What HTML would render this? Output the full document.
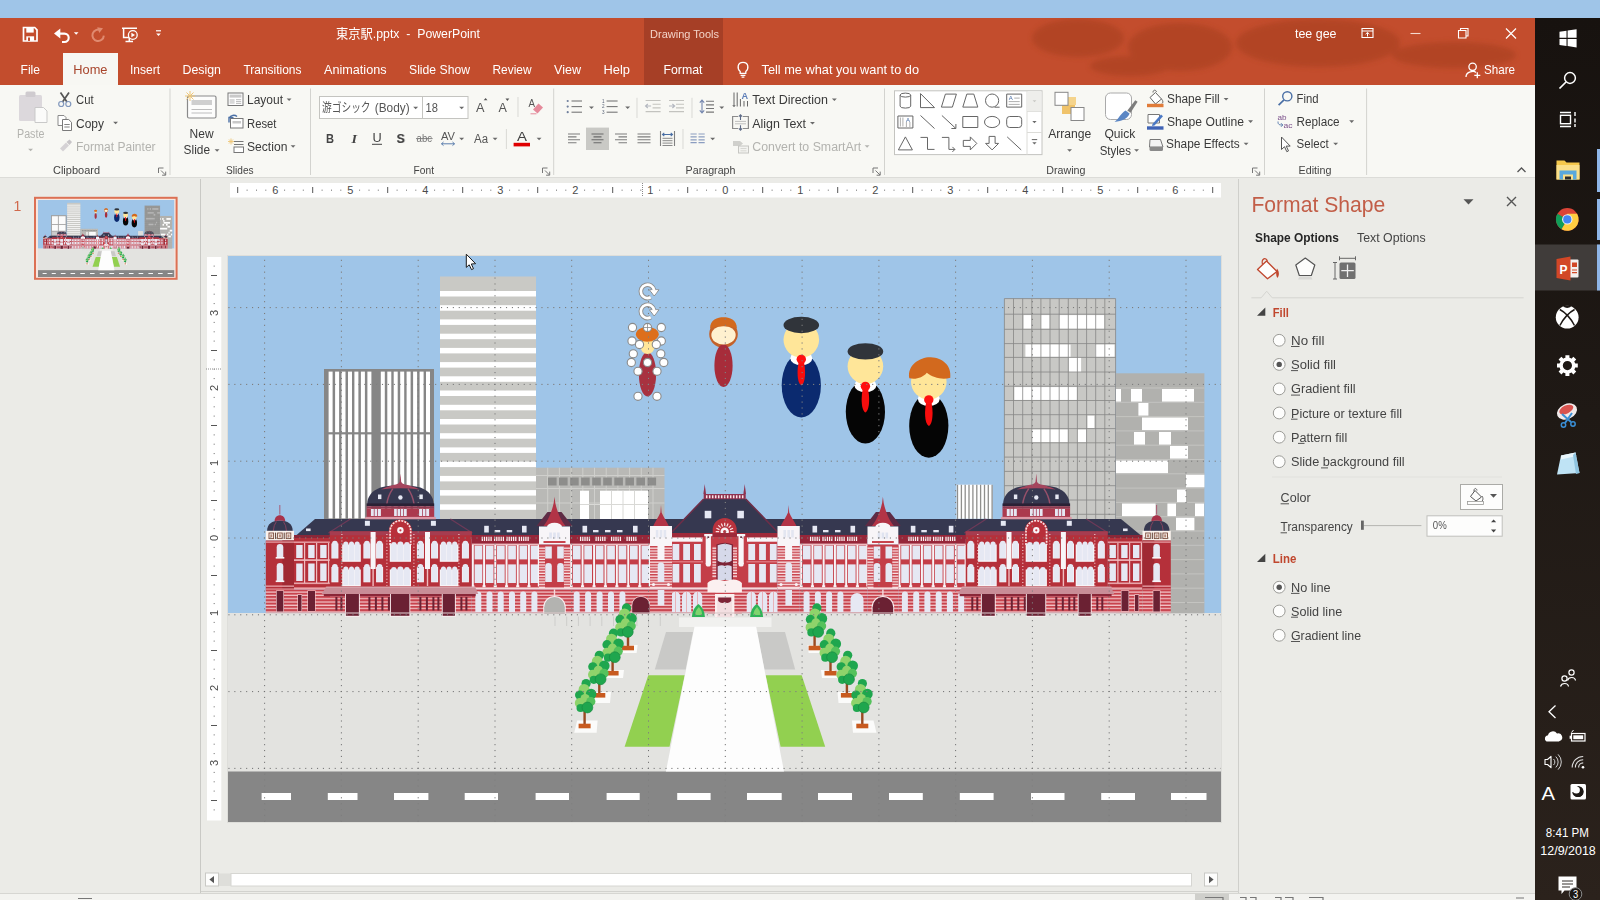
<!DOCTYPE html>
<html lang="en"><head><meta charset="utf-8"><title>PowerPoint</title>
<style>
*{box-sizing:border-box;margin:0;padding:0}
html,body{width:1600px;height:900px;overflow:hidden;background:#ebebe7;}
body{position:relative;font-family:"Liberation Sans","Noto Sans CJK JP",sans-serif;font-size:12px;color:#3b3b3b;}
.abs{position:absolute}
.t{position:absolute;white-space:nowrap;line-height:1}
#topstrip{left:0;top:0;width:1600px;height:18px;background:#9fc5e8}
#titlebar{left:0;top:18px;width:1535px;height:67px;background:#c34d2d}
#ctxtab{left:644px;top:18px;width:79px;height:67px;background:#a63f26}
#hometab{left:63px;top:53px;width:55px;height:33px;background:#f7f7f3}
#ribbon{left:0;top:85px;width:1535px;height:93px;background:#f8f8f4;border-bottom:1px solid #dcdcd8}
#leftpanel{left:0;top:179px;width:201px;height:714px;background:#ebebe7;border-right:1px solid #c9c9c5}
#work{left:201px;top:179px;width:1037px;height:714px;background:#ebebe7}
#pane{left:1238px;top:179px;width:297px;height:714px;background:#ebebe7;border-left:1px solid #cfcfcb}
#status{left:0;top:893px;width:1535px;height:7px;background:#f3f3f0;border-top:1px solid #d6d6d2}
#taskbar{left:1535px;top:18px;width:65px;height:882px;background:#1d1815}
.tab{color:#fff;font-size:12.5px;top:62px}
.rt{font-size:12.5px;color:#3a3a3a}
.rdis{color:#b4b4b0}
.grp{font-size:11.5px;color:#4a4a4a;top:165px}
.sep{position:absolute;width:1px;background:#d5d5d1;top:89px;height:86px}

.uisvg{position:absolute;left:0;top:0;width:1600px;height:900px;pointer-events:none;font-family:"Liberation Sans","Noto Sans CJK JP",sans-serif}

#slidesvg{position:absolute;left:0;top:0;width:1600px;height:900px;pointer-events:none}
.rn{font-family:"Liberation Sans",sans-serif;font-size:11px;fill:#4a4a4a}
</style></head>
<body>

<!-- base -->
<div id="topstrip" class="abs"></div>
<div id="titlebar" class="abs"></div>
<div id="ctxtab" class="abs"></div>
<div id="hometab" class="abs"></div>
<div id="ribbon" class="abs"></div>
<div id="leftpanel" class="abs"></div>
<div id="work" class="abs"></div>
<div id="pane" class="abs"></div>
<div id="status" class="abs"></div>
<div id="taskbar" class="abs"></div>
<!-- title -->
<svg class="uisvg" viewBox="0 0 1600 900">
<clipPath id="tbclip"><rect x="0" y="18" width="1535" height="67"/></clipPath>
<filter id="tbblur" x="-20%" y="-50%" width="140%" height="200%"><feGaussianBlur stdDeviation="2.5"/></filter>
<g clip-path="url(#tbclip)"><g fill="#a23c1f" opacity="0.5" filter="url(#tbblur)">
<ellipse cx="1078" cy="38" rx="46" ry="19"/><ellipse cx="1180" cy="47" rx="52" ry="24"/><ellipse cx="1318" cy="43" rx="82" ry="24"/><ellipse cx="1454" cy="55" rx="62" ry="13"/><ellipse cx="1130" cy="66" rx="40" ry="10"/>
</g></g>
<path d="M23.5 27.5h11.2l2.3 2.3v11.2h-13.5z" fill="none" stroke="#fff" stroke-width="1.7"/>
<rect x="26.3" y="28" width="7.4" height="4.6" fill="#ffffff"/>
<rect x="26.3" y="36.3" width="7.8" height="4.6" fill="#ffffff"/>
<rect x="28" y="37.5" width="2" height="3.4" fill="#c34d2d"/>
<path d="M58.5 33.6H64.5A4.2 4.2 0 0 1 64.5 42H62" fill="none" stroke="#fff" stroke-width="2.1"/>
<path d="M54 33.6L60.3 28.6V38.6Z" fill="#ffffff"/>
<path d="M73.9 32.3h4.6l-2.3 2.5z" fill="#ffffff"/>
<path d="M100.6 30.2A5.7 5.7 0 1 0 103.8 35.6" fill="none" stroke="#e08a70" stroke-width="2"/>
<path d="M97.2 27.2L103 28.3L99.3 33Z" fill="#e08a70"/>
<path d="M122 28.2H137M123.6 28.2V37.6H129M125.5 41.5H133M129.3 38V41.5" fill="none" stroke="#fff" stroke-width="1.5"/>
<circle cx="132.8" cy="35" r="4.4" fill="#c34d2d" stroke="#fff" stroke-width="1.3"/>
<path d="M131.4 32.8L135 35L131.4 37.2Z" fill="#ffffff"/>
<rect x="156" y="30.2" width="5" height="1.2" fill="#ffffff"/>
<path d="M156.2 33.4h4.6l-2.3 2.5z" fill="#ffffff"/>
<text x="336" y="38" textLength="144" lengthAdjust="spacingAndGlyphs" font-size="13" fill="#ffffff" style="white-space:pre">東京駅.pptx  -  PowerPoint</text>
<text x="650" y="37.5" textLength="69" lengthAdjust="spacingAndGlyphs" font-size="11.3" fill="#f3d3c8">Drawing Tools</text>
<text x="1295" y="38" textLength="41.5" lengthAdjust="spacingAndGlyphs" font-size="13" fill="#ffffff">tee gee</text>
<path d="M1362 28.5h11v9h-11zM1362 31h11" fill="none" stroke="#fff" stroke-width="1.1"/>
<path d="M1367.5 36.5V32.6M1365.6 34.2L1367.5 32.4L1369.4 34.2" fill="none" stroke="#fff" stroke-width="1"/>
<path d="M1410.5 33.5H1420.5" fill="none" stroke="#f5d9cf" stroke-width="1.1"/>
<path d="M1458.5 30.5h7.5v7.5h-7.5zM1460.5 30.5V28.5H1468V36H1466" fill="none" stroke="#fff" stroke-width="1.1"/>
<path d="M1506 28.5L1516 38.5M1516 28.5L1506 38.5" fill="none" stroke="#fff" stroke-width="1.2"/>
<text x="20.5" y="73.5" textLength="19.5" lengthAdjust="spacingAndGlyphs" font-size="13" fill="#ffffff">File</text>
<text x="130" y="73.5" textLength="30" lengthAdjust="spacingAndGlyphs" font-size="13" fill="#ffffff">Insert</text>
<text x="182.5" y="73.5" textLength="38.5" lengthAdjust="spacingAndGlyphs" font-size="13" fill="#ffffff">Design</text>
<text x="243.5" y="73.5" textLength="58" lengthAdjust="spacingAndGlyphs" font-size="13" fill="#ffffff">Transitions</text>
<text x="324" y="73.5" textLength="62.5" lengthAdjust="spacingAndGlyphs" font-size="13" fill="#ffffff">Animations</text>
<text x="409" y="73.5" textLength="61" lengthAdjust="spacingAndGlyphs" font-size="13" fill="#ffffff">Slide Show</text>
<text x="492.5" y="73.5" textLength="39" lengthAdjust="spacingAndGlyphs" font-size="13" fill="#ffffff">Review</text>
<text x="554" y="73.5" textLength="27" lengthAdjust="spacingAndGlyphs" font-size="13" fill="#ffffff">View</text>
<text x="603.5" y="73.5" textLength="26.5" lengthAdjust="spacingAndGlyphs" font-size="13" fill="#ffffff">Help</text>
<text x="663.5" y="73.5" textLength="39" lengthAdjust="spacingAndGlyphs" font-size="13" fill="#ffffff">Format</text>
<text x="761.5" y="73.5" textLength="157.5" lengthAdjust="spacingAndGlyphs" font-size="13" fill="#ffffff">Tell me what you want to do</text>
<text x="1484" y="73.5" textLength="31" lengthAdjust="spacingAndGlyphs" font-size="13" fill="#ffffff">Share</text>
<text x="73.3" y="73.5" textLength="34.2" lengthAdjust="spacingAndGlyphs" font-size="13" fill="#a8452c">Home</text>
<path d="M740.2 71.5C737 69 737.2 62.3 743 62.3C748.8 62.3 749 69 745.8 71.5V73.4H740.2ZM740.6 75.3H745.4M741.6 77.2H744.4" fill="none" stroke="#fff" stroke-width="1.3"/>
<circle cx="1472.6" cy="66.8" r="3.7" fill="none" stroke="#fff" stroke-width="1.3"/>
<path d="M1466 77C1466 71.3 1474 70.6 1476 72.5" fill="none" stroke="#fff" stroke-width="1.3"/>
<path d="M1477.3 72.3V78.3M1474.3 75.3H1480.3" fill="none" stroke="#fff" stroke-width="1.3"/>
</svg>
<!-- ribbon -->
<svg class="uisvg" viewBox="0 0 1600 900">
<path d="M170 88.5V175" fill="none" stroke="#d3d3cf" stroke-width="1"/>
<path d="M310.5 88.5V175" fill="none" stroke="#d3d3cf" stroke-width="1"/>
<path d="M553.7 88.5V175" fill="none" stroke="#d3d3cf" stroke-width="1"/>
<path d="M884.5 88.5V175" fill="none" stroke="#d3d3cf" stroke-width="1"/>
<path d="M1264.5 88.5V175" fill="none" stroke="#d3d3cf" stroke-width="1"/>
<path d="M1366.6 88.5V175" fill="none" stroke="#d3d3cf" stroke-width="1"/>
<rect x="19" y="95" width="23" height="26" fill="#dcd8dc" rx="1.5"/>
<rect x="25.5" y="91.5" width="10" height="5.5" fill="#cfcbcf" rx="1.5"/>
<path d="M35 107.5h8.5l3.5 3.5v11.5h-12z" fill="#fbfbfa" stroke="#c9c9c9" stroke-width="1"/>
<text x="17" y="138" textLength="27.4" lengthAdjust="spacingAndGlyphs" font-size="12.5" fill="#b3b3af">Paste</text>
<path d="M28.1 148.7h4.9l-2.4 2.6z" fill="#b3b3af"/>
<path d="M60.5 92.5L67 102M69 92.5L62.5 102" fill="none" stroke="#555" stroke-width="1.7"/>
<circle cx="61.2" cy="104" r="2.5" fill="none" stroke="#8298bd" stroke-width="1.2"/>
<circle cx="68.3" cy="104" r="2.5" fill="none" stroke="#8298bd" stroke-width="1.2"/>
<text x="76" y="104" textLength="17.6" lengthAdjust="spacingAndGlyphs" font-size="12.5" fill="#3a3a3a">Cut</text>
<path d="M58 115.5h6l2 2v8h-8z" fill="#fff" stroke="#8a8a8a" stroke-width="1"/>
<path d="M62.5 119.5h6.2l2.8 2.8v8.2h-9z" fill="#fff" stroke="#7a7a7a" stroke-width="1"/>
<path d="M64.3 124.5h5.4M64.3 127h5.4" fill="none" stroke="#777" stroke-width="0.9"/>
<text x="76" y="127.6" textLength="28" lengthAdjust="spacingAndGlyphs" font-size="12.5" fill="#3a3a3a">Copy</text>
<path d="M113.1 121.7h4.9l-2.4 2.6z" fill="#6a6a6a"/>
<path d="M60 148.5L66 142.5L69 145.5L63 151.5Z" fill="#d5d2d5"/>
<path d="M66.5 142L69.5 139.5L72 142L69.5 145Z" fill="#c8c5c8"/>
<text x="76" y="150.6" textLength="79.6" lengthAdjust="spacingAndGlyphs" font-size="12.5" fill="#b3b3af">Format Painter</text>
<text x="53" y="174" textLength="47" lengthAdjust="spacingAndGlyphs" font-size="11.8" fill="#444">Clipboard</text>
<path d="M158.5 173V168H163.5M161 170.5L165.5 175M165.7 171.6V175.2H162.1" fill="none" stroke="#777" stroke-width="1"/>
<rect x="187.5" y="96" width="28.5" height="22" fill="#fdfdfc" stroke="#8a8a8a" stroke-width="1.2" rx="1.5"/>
<rect x="191.5" y="100" width="20.5" height="5" fill="#cfcfcf"/>
<path d="M191.5 109.5h20.5M191.5 113h20.5" fill="none" stroke="#bdbdbd" stroke-width="1.2"/>
<path d="M190 91v10M185 96h10M186.5 92.5l7 7M193.5 92.5l-7 7" fill="none" stroke="#eec677" stroke-width="1"/>
<text x="189.6" y="138" textLength="24" lengthAdjust="spacingAndGlyphs" font-size="12.5" fill="#3a3a3a">New</text>
<text x="183.6" y="154.4" textLength="26.4" lengthAdjust="spacingAndGlyphs" font-size="12.5" fill="#3a3a3a">Slide</text>
<path d="M214.6 149.2h4.9l-2.4 2.6z" fill="#6a6a6a"/>
<rect x="228" y="93" width="15" height="12.5" fill="#fff" stroke="#777" stroke-width="1"/>
<rect x="229.6" y="94.6" width="11.8" height="3" fill="#c9c9c9"/>
<rect x="229.6" y="99" width="5" height="4.8" fill="#d9d9d9"/>
<path d="M236 99.7h5.2M236 101.6h5.2M236 103.4h5.2" fill="none" stroke="#aaa" stroke-width="0.8"/>
<text x="247" y="104" textLength="36" lengthAdjust="spacingAndGlyphs" font-size="12.5" fill="#3a3a3a">Layout</text>
<path d="M286.6 98.4h4.9l-2.4 2.6z" fill="#6a6a6a"/>
<rect x="230.5" y="118.5" width="12.5" height="9.5" fill="#fff" stroke="#777" stroke-width="1"/>
<rect x="232.5" y="121" width="8.5" height="2.5" fill="#c9c9c9"/>
<path d="M229 122.5V117.5H233.5M229.2 118A5 5 0 0 1 237 116.6" fill="none" stroke="#4a6fa5" stroke-width="1.4"/>
<text x="247" y="127.6" textLength="29.4" lengthAdjust="spacingAndGlyphs" font-size="12.5" fill="#3a3a3a">Reset</text>
<path d="M234 141.5h9.5M234 144.5h9.5" fill="none" stroke="#777" stroke-width="1.1"/>
<rect x="234" y="147" width="9.5" height="5.5" fill="#fff" stroke="#777" stroke-width="1"/>
<path d="M231 138.5v6M228 141.5h6M229 139.5l4 4M233 139.5l-4 4" fill="none" stroke="#eec677" stroke-width="0.9"/>
<text x="247" y="150.6" textLength="40.4" lengthAdjust="spacingAndGlyphs" font-size="12.5" fill="#3a3a3a">Section</text>
<path d="M290.6 145.2h4.9l-2.4 2.6z" fill="#6a6a6a"/>
<text x="226" y="174" textLength="27.6" lengthAdjust="spacingAndGlyphs" font-size="11.8" fill="#444">Slides</text>
<rect x="319.5" y="96.5" width="103" height="22" fill="#fff" stroke="#c4c4c0" stroke-width="1"/>
<rect x="422.5" y="96.5" width="45.5" height="22" fill="#fff" stroke="#c4c4c0" stroke-width="1"/>
<text x="322" y="112.4" textLength="48.6" lengthAdjust="spacingAndGlyphs" font-size="12.5" fill="#555">游ゴシック</text>
<text x="374.8" y="112.4" textLength="34.8" lengthAdjust="spacingAndGlyphs" font-size="12.5" fill="#555">(Body)</text>
<path d="M413.2 106.7h4.9l-2.4 2.6z" fill="#6a6a6a"/>
<text x="425.6" y="112.4" textLength="12.4" lengthAdjust="spacingAndGlyphs" font-size="12.5" fill="#555">18</text>
<path d="M459.2 106.7h4.9l-2.4 2.6z" fill="#6a6a6a"/>
<text x="476" y="112" textLength="8.5" lengthAdjust="spacingAndGlyphs" font-size="13.5" fill="#555">A</text>
<path d="M483.7 100.3l1.9-2.3l1.9 2.3z" fill="#555"/>
<text x="498.6" y="112" textLength="8.4" lengthAdjust="spacingAndGlyphs" font-size="12" fill="#555">A</text>
<path d="M505.5 98.6l1.9 2.3l1.9-2.3z" fill="#555"/>
<path d="M518 97V117" fill="none" stroke="#d9d9d5" stroke-width="1"/>
<text x="528.5" y="107" textLength="6.5" lengthAdjust="spacingAndGlyphs" font-size="10.5" fill="#555">A</text>
<path d="M533 109.5L538.5 103.5L543 107.5L537.5 113.5Z" fill="#e58a9a"/>
<path d="M530.5 113.8h6" fill="none" stroke="#e58a9a" stroke-width="1"/>
<text x="326" y="142.6" textLength="8" lengthAdjust="spacingAndGlyphs" font-size="13" fill="#444" font-weight="bold">B</text>
<text x="351.5" y="142.6" textLength="5.5" lengthAdjust="spacingAndGlyphs" font-size="13" fill="#444" font-weight="bold" font-style="italic" font-family="Liberation Serif,serif">I</text>
<text x="372.4" y="141.8" textLength="9.2" lengthAdjust="spacingAndGlyphs" font-size="13" fill="#444">U</text>
<path d="M372 144.3h10" fill="none" stroke="#444" stroke-width="1"/>
<text x="397.4" y="143.2" textLength="8.2" lengthAdjust="spacingAndGlyphs" font-size="13.5" fill="#b9b9b9" font-weight="bold">S</text>
<text x="396.6" y="142.6" textLength="8.2" lengthAdjust="spacingAndGlyphs" font-size="13.5" fill="#444" font-weight="bold">S</text>
<text x="416.6" y="142" textLength="15.4" lengthAdjust="spacingAndGlyphs" font-size="10.5" fill="#777">abc</text>
<path d="M416 138.6h16.6" fill="none" stroke="#777" stroke-width="0.9"/>
<text x="441" y="140" textLength="14" lengthAdjust="spacingAndGlyphs" font-size="10.5" fill="#555">AV</text>
<path d="M441.5 143.8h13M443.5 142l-2 1.8l2 1.8M452.5 142l2 1.8l-2 1.8" fill="none" stroke="#4a6fa5" stroke-width="0.9"/>
<path d="M459.2 137.7h4.9l-2.4 2.6z" fill="#6a6a6a"/>
<text x="474" y="142.6" textLength="14" lengthAdjust="spacingAndGlyphs" font-size="12" fill="#555">Aa</text>
<path d="M492.6 137.7h4.9l-2.4 2.6z" fill="#6a6a6a"/>
<path d="M506.4 129V149" fill="none" stroke="#d9d9d5" stroke-width="1"/>
<text x="517" y="140.6" textLength="10" lengthAdjust="spacingAndGlyphs" font-size="13.5" fill="#444">A</text>
<rect x="513.6" y="142.8" width="16.4" height="3.6" fill="#e00000"/>
<path d="M536.6 137.7h4.9l-2.4 2.6z" fill="#6a6a6a"/>
<text x="413.6" y="174" textLength="20.4" lengthAdjust="spacingAndGlyphs" font-size="11.8" fill="#444">Font</text>
<path d="M542.5 173V168H547.5M545 170.5L549.5 175M549.7 171.6V175.2H546.1" fill="none" stroke="#777" stroke-width="1"/>
<circle cx="567.7" cy="101" r="1.1" fill="#6f7f9c"/>
<path d="M571.5 101h10.5" fill="none" stroke="#777" stroke-width="1.1"/>
<circle cx="567.7" cy="106.6" r="1.1" fill="#6f7f9c"/>
<path d="M571.5 106.6h10.5" fill="none" stroke="#777" stroke-width="1.1"/>
<circle cx="567.7" cy="112.2" r="1.1" fill="#6f7f9c"/>
<path d="M571.5 112.2h10.5" fill="none" stroke="#777" stroke-width="1.1"/>
<path d="M589 106.4h4.9l-2.4 2.6z" fill="#6a6a6a"/>
<text x="602" y="102.7" font-size="4.6" fill="#5a6478">1</text>
<path d="M606.6 101h11" fill="none" stroke="#777" stroke-width="1.1"/>
<text x="602" y="108.3" font-size="4.6" fill="#5a6478">2</text>
<path d="M606.6 106.6h11" fill="none" stroke="#777" stroke-width="1.1"/>
<text x="602" y="113.9" font-size="4.6" fill="#5a6478">3</text>
<path d="M606.6 112.2h11" fill="none" stroke="#777" stroke-width="1.1"/>
<path d="M625.2 106.4h4.9l-2.4 2.6z" fill="#6a6a6a"/>
<path d="M637 97.8V118" fill="none" stroke="#d9d9d5" stroke-width="1"/>
<path d="M645.6 100.5h15M652.6 104.2h8M652.6 107.9h8M645.6 111.6h15" fill="none" stroke="#c3c3bf" stroke-width="1.1"/>
<path d="M651.1 106h-5.5M647.8 104l-2.2 2l2.2 2" fill="none" stroke="#b4b8c0" stroke-width="1.2"/>
<path d="M669 100.5h15M676 104.2h8M676 107.9h8M669 111.6h15" fill="none" stroke="#c3c3bf" stroke-width="1.1"/>
<path d="M669 106h5.5M672.4 104l2.2 2l-2.2 2" fill="none" stroke="#b4b8c0" stroke-width="1.2"/>
<path d="M692 97.8V118" fill="none" stroke="#d9d9d5" stroke-width="1"/>
<path d="M702 100v13M699.8 102.6l2.2-2.6l2.2 2.6M699.8 110.4l2.2 2.6l2.2-2.6" fill="none" stroke="#7385ad" stroke-width="1.1"/>
<path d="M706 101.3h8M706 104.9h8M706 108.5h8M706 112.1h8" fill="none" stroke="#777" stroke-width="1.1"/>
<path d="M719.3 106.4h4.9l-2.4 2.6z" fill="#6a6a6a"/>
<path d="M734 92.5v14M737.2 92.5v14M740.4 99v7.5M744 101v5.5M747.5 101v5.5M732.8 105l1.2 1.6l1.2-1.6" fill="none" stroke="#666" stroke-width="1"/>
<text x="741.6" y="99.3" textLength="6.6" lengthAdjust="spacingAndGlyphs" font-size="9.5" fill="#5f7fb8" font-weight="bold">A</text>
<text x="752.3" y="103.8" textLength="75.7" lengthAdjust="spacingAndGlyphs" font-size="12.5" fill="#3a3a3a">Text Direction</text>
<path d="M831.9 98.4h4.9l-2.4 2.6z" fill="#6a6a6a"/>
<path d="M738 116.5H732.6V128.5H738M743 116.5H748.4V128.5H743" fill="none" stroke="#8c8c8c" stroke-width="1.2"/>
<path d="M735 121.4H746M735 123.8H746" fill="none" stroke="#b8b8b8" stroke-width="0.9"/>
<path d="M740.5 114.8V120M738.8 116.7L740.5 114.9L742.2 116.7M740.5 130.2V125.2M738.8 128.3L740.5 130.1L742.2 128.3" fill="none" stroke="#5d6a86" stroke-width="1.1"/>
<text x="752.3" y="127.6" textLength="53.7" lengthAdjust="spacingAndGlyphs" font-size="12.5" fill="#3a3a3a">Align Text</text>
<path d="M810 122h4.9l-2.4 2.6z" fill="#6a6a6a"/>
<path d="M733 141h7l3 2.5l-3 2.5h-7z" fill="#d0d0cc"/>
<rect x="738.5" y="146" width="10" height="7" fill="#f3f3f0" stroke="#c6c6c2" stroke-width="1"/>
<path d="M740.5 148.5h6M740.5 150.8h6" fill="none" stroke="#cfcfcb" stroke-width="0.8"/>
<text x="752.3" y="150.5" textLength="109" lengthAdjust="spacingAndGlyphs" font-size="12.5" fill="#b3b3af">Convert to SmartArt</text>
<path d="M864.6 145.2h4.9l-2.4 2.6z" fill="#b3b3af"/>
<rect x="586" y="127.6" width="23" height="22.4" fill="#c9c9c5"/>
<path d="M568 134h12M568 136.9h8.5M568 139.8h12M568 142.7h8.5" fill="none" stroke="#7c7c7c" stroke-width="1.1"/>
<path d="M591.5 134h12M593.5 136.9h8M591.5 139.8h12M593.5 142.7h8" fill="none" stroke="#6a6a6a" stroke-width="1.1"/>
<path d="M615 134h12M618.5 136.9h8.5M615 139.8h12M618.5 142.7h8.5" fill="none" stroke="#7c7c7c" stroke-width="1.1"/>
<path d="M637.5 134h13M637.5 136.9h13M637.5 139.8h13M637.5 142.7h13" fill="none" stroke="#7c7c7c" stroke-width="1.1"/>
<path d="M660.5 131v15M674.5 131v15" fill="none" stroke="#808080" stroke-width="1.1"/>
<path d="M662.5 138.3h10M662.5 140.7h10M662.5 143.1h10M662.5 145.5h10" fill="none" stroke="#8a8a8a" stroke-width="1"/>
<path d="M662.5 134.5h10M664.3 132.8l-1.8 1.7l1.8 1.7M670.7 132.8l1.8 1.7l-1.8 1.7" fill="none" stroke="#4a6fa5" stroke-width="1.1"/>
<path d="M683 129V149" fill="none" stroke="#d9d9d5" stroke-width="1"/>
<path d="M690.5 134h6.2M690.5 136.9h6.2M690.5 139.8h6.2M690.5 142.7h6.2" fill="none" stroke="#8b9dc0" stroke-width="1.2"/>
<path d="M698.5 134h6.2M698.5 136.9h6.2M698.5 139.8h6.2M698.5 142.7h6.2" fill="none" stroke="#8b9dc0" stroke-width="1.2"/>
<path d="M710.2 137.7h4.9l-2.4 2.6z" fill="#6a6a6a"/>
<text x="685.6" y="174" textLength="49.9" lengthAdjust="spacingAndGlyphs" font-size="11.8" fill="#444">Paragraph</text>
<path d="M873 173V168H878M875.5 170.5L880 175M880.2 171.6V175.2H876.6" fill="none" stroke="#777" stroke-width="1"/>
<rect x="894.5" y="90.8" width="147.5" height="63.8" fill="#fff" stroke="#c4c4c0" stroke-width="1"/>
<path d="M1027 90.8V154.6M1027 111.5H1042M1027 132.5H1042" fill="none" stroke="#dcdcd8" stroke-width="1"/>
<rect x="1027.5" y="91.3" width="14" height="20" fill="#eeeeeb"/>
<path d="M1032.6 100.3h3.8l-1.9 2z" fill="#c9c9c5"/>
<path d="M1032.3 120.9h4.3l-2.2 2.3z" fill="#6a6a6a"/>
<path d="M1031.8 139.6h5.4" fill="none" stroke="#666" stroke-width="1"/>
<path d="M1032.3 142.2h4.3l-2.2 2.3z" fill="#6a6a6a"/>
<path d="M900.1 95.1v11a5.3 2 0 0 0 10.6 0v-11a5.3 2 0 0 0 -10.6 0a5.3 2 0 0 0 10.6 0" fill="none" stroke="#666" stroke-width="1" stroke-linejoin="round"/>
<path d="M920.5 93.6v14h14z" fill="none" stroke="#666" stroke-width="1" stroke-linejoin="round"/>
<path d="M945.4 94.1h11l-4 13h-11z" fill="none" stroke="#666" stroke-width="1" stroke-linejoin="round"/>
<path d="M966.8 94.1h7l4 13h-15z" fill="none" stroke="#666" stroke-width="1" stroke-linejoin="round"/>
<circle cx="992.1" cy="100.6" r="6.6" fill="none" stroke="#666" stroke-width="1" stroke-linejoin="round"/>
<path d="M994.6 107.2h5" fill="none" stroke="#666" stroke-width="1" stroke-linejoin="round"/>
<rect x="1006.7" y="94.1" width="15" height="13" fill="none" stroke="#666" stroke-width="1" stroke-linejoin="round"/>
<text x="1008.7" y="100.1" textLength="4" lengthAdjust="spacingAndGlyphs" font-size="5.5" fill="#4a6fa5">A</text>
<path d="M1014.2 98.1h5.5M1008.7 101.6h11M1008.7 104.4h11" fill="none" stroke="#999" stroke-width="0.8"/>
<rect x="897.9" y="116" width="15" height="12" fill="none" stroke="#666" stroke-width="1" stroke-linejoin="round"/>
<path d="M900.4 117.5v9M902.9 117.5v9M906.4 122v5M909.9 122v5" fill="none" stroke="#999" stroke-width="0.8"/>
<text x="905.9" y="121.5" textLength="4" lengthAdjust="spacingAndGlyphs" font-size="5.5" fill="#4a6fa5">A</text>
<path d="M920.5 115.5l14 13" fill="none" stroke="#666" stroke-width="1" stroke-linejoin="round"/>
<path d="M941.9 115.5l14 13m0-4.5v4.5h-4.5" fill="none" stroke="#666" stroke-width="1" stroke-linejoin="round"/>
<rect x="962.8" y="116.5" width="15" height="11" fill="none" stroke="#666" stroke-width="1" stroke-linejoin="round"/>
<ellipse cx="992.1" cy="122" rx="7.6" ry="5.6" fill="none" stroke="#666" stroke-width="1" stroke-linejoin="round"/>
<rect x="1006.7" y="116.5" width="15" height="11" fill="none" stroke="#666" stroke-width="1" stroke-linejoin="round" rx="3"/>
<path d="M905.4 136.9l7 13h-14z" fill="none" stroke="#666" stroke-width="1" stroke-linejoin="round"/>
<path d="M920.5 137.4h7v12h7" fill="none" stroke="#666" stroke-width="1" stroke-linejoin="round"/>
<path d="M941.9 137.4h7v12h6m-2.5-2.5l2.5 2.5l-2.5 2.5" fill="none" stroke="#666" stroke-width="1" stroke-linejoin="round"/>
<path d="M963.3 140.4h7v-3.5l6.5 6.5l-6.5 6.5v-3.5h-7z" fill="none" stroke="#666" stroke-width="1" stroke-linejoin="round"/>
<path d="M989.1 136.4v7h-3.5l6.5 6.5l6.5-6.5h-3.5v-7z" fill="none" stroke="#666" stroke-width="1" stroke-linejoin="round"/>
<path d="M1007.2 136.9l14 13" fill="none" stroke="#666" stroke-width="1" stroke-linejoin="round"/>
<rect x="1062" y="101" width="13" height="13" fill="#f0c36a"/>
<rect x="1068" y="97" width="8" height="8" fill="#f5d48c"/>
<rect x="1055" y="92.3" width="13" height="13" fill="#fff" stroke="#888" stroke-width="1"/>
<rect x="1071" y="107.5" width="13" height="13" fill="#fff" stroke="#888" stroke-width="1"/>
<text x="1048.2" y="138.2" textLength="43.2" lengthAdjust="spacingAndGlyphs" font-size="12.5" fill="#3a3a3a">Arrange</text>
<path d="M1067.1 149.2h4.9l-2.4 2.6z" fill="#6a6a6a"/>
<rect x="1105.5" y="93" width="26" height="26.5" fill="#fff" stroke="#aaa" stroke-width="1" rx="5"/>
<path d="M1135.3 100.2L1137.6 101.8L1130.2 113.2L1127 111Z" fill="#7d7d7d"/>
<path d="M1129.6 113.6C1128.5 118 1122 121.5 1114.5 122C1118.5 119.5 1120.5 113.5 1125.5 110.6Z" fill="#5b86c4"/>
<path d="M1126.2 110.2L1130.4 113" fill="none" stroke="#f8f8f4" stroke-width="0.9"/>
<text x="1104.4" y="138.2" textLength="30.9" lengthAdjust="spacingAndGlyphs" font-size="12.5" fill="#3a3a3a">Quick</text>
<text x="1099.7" y="154.5" textLength="31.3" lengthAdjust="spacingAndGlyphs" font-size="12.5" fill="#3a3a3a">Styles</text>
<path d="M1134.1 149.2h4.9l-2.4 2.6z" fill="#6a6a6a"/>
<path d="M1150 97.5l5.5-5l6 6.5l-6 5z" fill="#fff" stroke="#666" stroke-width="1"/>
<path d="M1153 92.5c0-3 3-3 3.5-0.5M1161.5 99c2 2 1.5 4 0.5 4.5" fill="none" stroke="#666" stroke-width="1"/>
<rect x="1147" y="103.8" width="16.5" height="3.4" fill="#e07b39"/>
<text x="1167" y="103" textLength="52.7" lengthAdjust="spacingAndGlyphs" font-size="12.5" fill="#3a3a3a">Shape Fill</text>
<path d="M1223.6 98h4.9l-2.4 2.6z" fill="#6a6a6a"/>
<path d="M1148 114.5h11.5v8.5h-11.5z" fill="#fff" stroke="#777" stroke-width="1"/>
<path d="M1152.5 124L1161 114.5L1163 116.3L1154.5 125.5L1152 126Z" fill="#4a78c4"/>
<rect x="1147" y="126.3" width="16.5" height="3.4" fill="#3f63b5"/>
<text x="1167" y="125.6" textLength="77" lengthAdjust="spacingAndGlyphs" font-size="12.5" fill="#3a3a3a">Shape Outline</text>
<path d="M1248.1 120.3h4.9l-2.4 2.6z" fill="#6a6a6a"/>
<path d="M1150 139.5h10.5l2.5 7.5h-13.5z" fill="#f3f3f3" stroke="#777" stroke-width="1"/>
<path d="M1149.5 147h13.5v2.5a1.5 1.5 0 0 1 -1.5 1.5h-10.5a1.5 1.5 0 0 1 -1.5-1.5z" fill="#8a8a8a"/>
<text x="1166" y="148" textLength="73.8" lengthAdjust="spacingAndGlyphs" font-size="12.5" fill="#3a3a3a">Shape Effects</text>
<path d="M1243.6 142.7h4.9l-2.4 2.6z" fill="#6a6a6a"/>
<text x="1046.3" y="174" textLength="39.1" lengthAdjust="spacingAndGlyphs" font-size="11.8" fill="#444">Drawing</text>
<path d="M1252.5 173V168H1257.5M1255 170.5L1259.5 175M1259.7 171.6V175.2H1256.1" fill="none" stroke="#777" stroke-width="1"/>
<circle cx="1287.3" cy="96.3" r="4.6" fill="none" stroke="#4a6fa5" stroke-width="1.4"/>
<path d="M1284 99.8L1278.6 105.2" fill="none" stroke="#4a6fa5" stroke-width="1.7"/>
<text x="1296.6" y="103" textLength="22" lengthAdjust="spacingAndGlyphs" font-size="12.5" fill="#3a3a3a">Find</text>
<text x="1277.5" y="119.5" textLength="9" lengthAdjust="spacingAndGlyphs" font-size="8" fill="#7a4f8a">ab</text>
<text x="1283.5" y="127.5" textLength="9" lengthAdjust="spacingAndGlyphs" font-size="8" fill="#7a4f8a">ac</text>
<path d="M1278 121.5c0 3 1 3.5 4.5 3.5M1281 123.2l1.8 1.8l-1.8 1.8" fill="none" stroke="#4a6fa5" stroke-width="0.9"/>
<text x="1296.6" y="126" textLength="43" lengthAdjust="spacingAndGlyphs" font-size="12.5" fill="#3a3a3a">Replace</text>
<path d="M1349.2 120.3h4.9l-2.4 2.6z" fill="#6a6a6a"/>
<path d="M1281.5 137v12.5l3-2.8l2.3 5l1.7-0.8l-2.3-4.8h4z" fill="#fff" stroke="#555" stroke-width="1" stroke-linejoin="round"/>
<text x="1296.6" y="148" textLength="32" lengthAdjust="spacingAndGlyphs" font-size="12.5" fill="#3a3a3a">Select</text>
<path d="M1333.2 142.7h4.9l-2.4 2.6z" fill="#6a6a6a"/>
<text x="1298.6" y="174" textLength="32.8" lengthAdjust="spacingAndGlyphs" font-size="11.8" fill="#444">Editing</text>
<path d="M1517.5 172l4-4l4 4" fill="none" stroke="#555" stroke-width="1.3"/>
</svg>
<!-- slide -->
<svg id="slidesvg" viewBox="0 0 1600 900">
<defs><pattern id="gs" x="0" y="589.4" width="8" height="3.3" patternUnits="userSpaceOnUse"><rect width="8" height="3.3" fill="#c8434d"/><rect y="2.05" width="8" height="1.25" fill="#f1c1c5"/></pattern><pattern id="qs" x="0" y="546" width="8" height="2.8" patternUnits="userSpaceOnUse"><rect width="8" height="2.8" fill="#c8434d"/><rect y="1.5" width="8" height="1.3" fill="#fbe4e6"/></pattern>
<g id="slideart">
<rect x="228" y="256" width="993" height="358" fill="#9fc5e8"/>
<rect x="228" y="613" width="993" height="159" fill="#e3e3e0"/>
<rect x="228" y="771.5" width="993" height="50.5" fill="#868686"/>
<rect x="261.6" y="793" width="29.4" height="7" fill="#ffffff"/>
<rect x="327.8" y="793" width="29.7" height="7" fill="#ffffff"/>
<rect x="394" y="793" width="34.4" height="7" fill="#ffffff"/>
<rect x="464.7" y="793" width="33.3" height="7" fill="#ffffff"/>
<rect x="535.6" y="793" width="33.4" height="7" fill="#ffffff"/>
<rect x="606.6" y="793" width="33.1" height="7" fill="#ffffff"/>
<rect x="677.2" y="793" width="33.4" height="7" fill="#ffffff"/>
<rect x="747" y="793" width="34.7" height="7" fill="#ffffff"/>
<rect x="818" y="793" width="34" height="7" fill="#ffffff"/>
<rect x="889" y="793" width="33.8" height="7" fill="#ffffff"/>
<rect x="959.8" y="793" width="33.8" height="7" fill="#ffffff"/>
<rect x="1031" y="793" width="33.5" height="7" fill="#ffffff"/>
<rect x="1101.2" y="793" width="33.8" height="7" fill="#ffffff"/>
<rect x="1171" y="793" width="35.5" height="7" fill="#ffffff"/>
<rect x="440" y="276.5" width="96" height="244" fill="#c9c9c5"/>
<rect x="440" y="291" width="96" height="5.5" fill="#ffffff"/>
<rect x="440" y="305.2" width="96" height="5.5" fill="#ffffff"/>
<rect x="440" y="319.4" width="96" height="5.5" fill="#ffffff"/>
<rect x="440" y="333.7" width="96" height="5.5" fill="#ffffff"/>
<rect x="440" y="347.9" width="96" height="5.5" fill="#ffffff"/>
<rect x="440" y="362.1" width="96" height="5.5" fill="#ffffff"/>
<rect x="440" y="376.3" width="96" height="5.5" fill="#ffffff"/>
<rect x="440" y="390.5" width="96" height="5.5" fill="#ffffff"/>
<rect x="440" y="404.8" width="96" height="5.5" fill="#ffffff"/>
<rect x="440" y="419" width="96" height="5.5" fill="#ffffff"/>
<rect x="440" y="433.2" width="96" height="5.5" fill="#ffffff"/>
<rect x="440" y="447.4" width="96" height="5.5" fill="#ffffff"/>
<rect x="440" y="461.6" width="96" height="5.5" fill="#ffffff"/>
<rect x="440" y="475.9" width="96" height="5.5" fill="#ffffff"/>
<rect x="440" y="490.1" width="96" height="5.5" fill="#ffffff"/>
<rect x="440" y="504.3" width="96" height="5.5" fill="#ffffff"/>
<rect x="324" y="369" width="110" height="152" fill="#868686"/>
<rect x="328.6" y="371.6" width="4" height="60.6" fill="#ffffff"/>
<rect x="328.6" y="434.4" width="4" height="84" fill="#ffffff"/>
<rect x="335.1" y="371.6" width="4" height="60.6" fill="#ffffff"/>
<rect x="335.1" y="434.4" width="4" height="84" fill="#ffffff"/>
<rect x="341.5" y="371.6" width="4" height="60.6" fill="#ffffff"/>
<rect x="341.5" y="434.4" width="4" height="84" fill="#ffffff"/>
<rect x="348" y="371.6" width="4" height="60.6" fill="#ffffff"/>
<rect x="348" y="434.4" width="4" height="84" fill="#ffffff"/>
<rect x="354.4" y="371.6" width="4" height="60.6" fill="#ffffff"/>
<rect x="354.4" y="434.4" width="4" height="84" fill="#ffffff"/>
<rect x="360.9" y="371.6" width="4" height="60.6" fill="#ffffff"/>
<rect x="360.9" y="434.4" width="4" height="84" fill="#ffffff"/>
<rect x="367.4" y="371.6" width="4" height="60.6" fill="#ffffff"/>
<rect x="367.4" y="434.4" width="4" height="84" fill="#ffffff"/>
<rect x="380.8" y="371.6" width="4" height="60.6" fill="#ffffff"/>
<rect x="380.8" y="434.4" width="4" height="84" fill="#ffffff"/>
<rect x="387.3" y="371.6" width="4" height="60.6" fill="#ffffff"/>
<rect x="387.3" y="434.4" width="4" height="84" fill="#ffffff"/>
<rect x="393.7" y="371.6" width="4" height="60.6" fill="#ffffff"/>
<rect x="393.7" y="434.4" width="4" height="84" fill="#ffffff"/>
<rect x="400.2" y="371.6" width="4" height="60.6" fill="#ffffff"/>
<rect x="400.2" y="434.4" width="4" height="84" fill="#ffffff"/>
<rect x="406.6" y="371.6" width="4" height="60.6" fill="#ffffff"/>
<rect x="406.6" y="434.4" width="4" height="84" fill="#ffffff"/>
<rect x="413.1" y="371.6" width="4" height="60.6" fill="#ffffff"/>
<rect x="413.1" y="434.4" width="4" height="84" fill="#ffffff"/>
<rect x="419.6" y="371.6" width="4" height="60.6" fill="#ffffff"/>
<rect x="419.6" y="434.4" width="4" height="84" fill="#ffffff"/>
<rect x="426" y="371.6" width="4" height="60.6" fill="#ffffff"/>
<rect x="426" y="434.4" width="4" height="84" fill="#ffffff"/>
<rect x="536" y="467.7" width="128.5" height="52" fill="#b9b9b6"/>
<path d="M547.7 467.7V520M559.4 467.7V520M571.1 467.7V520M582.8 467.7V520M594.5 467.7V520M606.2 467.7V520M617.9 467.7V520M629.6 467.7V520M641.3 467.7V520M653 467.7V520M536 475.5H664.5M536 488.5H664.5M536 503H664.5" fill="none" stroke="#cfcfcc" stroke-width="1"/>
<rect x="548" y="477.5" width="8.6" height="8" fill="#8d8d8b"/>
<rect x="559" y="477.5" width="8.6" height="8" fill="#8d8d8b"/>
<rect x="570.1" y="477.5" width="8.6" height="8" fill="#8d8d8b"/>
<rect x="581.1" y="477.5" width="8.6" height="8" fill="#8d8d8b"/>
<rect x="592.2" y="477.5" width="8.6" height="8" fill="#8d8d8b"/>
<rect x="603.2" y="477.5" width="8.6" height="8" fill="#8d8d8b"/>
<rect x="614.3" y="477.5" width="8.6" height="8" fill="#8d8d8b"/>
<rect x="625.4" y="477.5" width="8.6" height="8" fill="#8d8d8b"/>
<rect x="636.4" y="477.5" width="8.6" height="8" fill="#8d8d8b"/>
<rect x="647.5" y="477.5" width="8.6" height="8" fill="#8d8d8b"/>
<rect x="580" y="490.7" width="9" height="29" fill="#ffffff"/>
<rect x="600" y="490.7" width="48" height="29" fill="#ffffff"/>
<path d="M611.5 490.7V520M623 490.7V520M634.5 490.7V520M580 504.5H648" fill="none" stroke="#d9d9d6" stroke-width="1"/>
<rect x="1004.4" y="298.6" width="111.2" height="222" fill="#c8c8c5"/>
<rect x="1023.6" y="315.1" width="7.8" height="13.6" fill="#ffffff"/>
<rect x="1040.9" y="315.1" width="8.7" height="13.6" fill="#ffffff"/>
<rect x="1059.2" y="315.1" width="45.2" height="13.6" fill="#ffffff"/>
<rect x="1025.4" y="344.5" width="45.2" height="12.3" fill="#ffffff"/>
<rect x="1095.2" y="344.5" width="19.3" height="12.3" fill="#ffffff"/>
<rect x="1068.8" y="357.6" width="12.3" height="14.5" fill="#ffffff"/>
<rect x="1014.4" y="387.1" width="62.5" height="12.8" fill="#ffffff"/>
<rect x="1087.5" y="415.6" width="6.8" height="12.4" fill="#ffffff"/>
<rect x="1031.8" y="429.5" width="36.1" height="12.7" fill="#ffffff"/>
<rect x="1077.4" y="429.5" width="8.7" height="12.7" fill="#ffffff"/>
<path d="M1004.4 298.6V520M1013.5 298.6V520M1022.7 298.6V520M1031.8 298.6V520M1040.9 298.6V520M1050 298.6V520M1059.2 298.6V520M1068.3 298.6V520M1077.4 298.6V520M1086.6 298.6V520M1095.7 298.6V520M1104.8 298.6V520M1115.6 298.6V520M1004.4 298.6H1115.6M1004.4 314.2H1115.6M1004.4 329.3H1115.6M1004.4 343.6H1115.6M1004.4 357.4H1115.6M1004.4 372H1115.6M1004.4 386.2H1115.6M1004.4 400.5H1115.6M1004.4 414.7H1115.6M1004.4 428.6H1115.6M1004.4 442.8H1115.6M1004.4 457.1H1115.6M1004.4 471.4H1115.6M1004.4 485.7H1115.6M1004.4 500H1115.6M1004.4 514.3H1115.6" fill="none" stroke="#878785" stroke-width="0.8"/>
<rect x="1116" y="373.3" width="88.4" height="240" fill="#b1b1ae"/>
<path d="M1116 388H1204.4M1116 402.3H1204.4M1116 416.6H1204.4M1116 430.9H1204.4M1116 445.2H1204.4M1116 459.5H1204.4M1116 473.8H1204.4M1116 488.1H1204.4M1116 502.4H1204.4M1116 516.7H1204.4M1116 531H1204.4M1116 545.3H1204.4M1116 559.6H1204.4M1116 573.9H1204.4M1116 588.2H1204.4M1116 602.5H1204.4" fill="none" stroke="#c4c4c1" stroke-width="1"/>
<rect x="1116" y="389" width="5" height="12.6" fill="#ffffff"/>
<rect x="1131" y="389" width="11" height="12.6" fill="#ffffff"/>
<rect x="1162" y="389" width="32" height="12.6" fill="#ffffff"/>
<rect x="1138.4" y="403" width="10" height="12.6" fill="#ffffff"/>
<rect x="1142" y="417.5" width="46" height="12.6" fill="#ffffff"/>
<rect x="1134" y="432" width="11" height="12.6" fill="#ffffff"/>
<rect x="1159" y="432" width="12" height="12.6" fill="#ffffff"/>
<rect x="1170" y="446" width="18" height="12.6" fill="#ffffff"/>
<rect x="1116" y="460.5" width="52" height="12.6" fill="#ffffff"/>
<rect x="1186" y="474.7" width="18.4" height="12.6" fill="#ffffff"/>
<rect x="1177" y="489.5" width="9" height="12.6" fill="#ffffff"/>
<rect x="1122" y="503.5" width="33.6" height="12.6" fill="#ffffff"/>
<rect x="1167.4" y="503.5" width="8.6" height="12.6" fill="#ffffff"/>
<rect x="1195" y="503.5" width="9" height="12.6" fill="#ffffff"/>
<rect x="1176" y="517.7" width="18.4" height="12.6" fill="#ffffff"/>
<rect x="956.5" y="484.7" width="36" height="34" fill="#ffffff"/>
<path d="M957.5 484.7V519M961.4 484.7V519M965.2 484.7V519M969 484.7V519M972.9 484.7V519M976.8 484.7V519M980.6 484.7V519M984.5 484.7V519M988.3 484.7V519M992.1 484.7V519" fill="none" stroke="#8f8f8d" stroke-width="1.3"/>
<polygon points="296,535.5 315,519 1121,519 1141,535.5" fill="#363850"/>
<rect x="294" y="535" width="849" height="4" fill="#8a2738"/>
<path d="M350.4 519L328.4 533M450.4 519L472.4 533M986.3 519L964.3 533M1086.3 519L1108.3 533" fill="none" stroke="#6d3a58" stroke-width="1.2"/>
<rect x="306" y="528.5" width="4.6" height="2.6" fill="#e6e8f3"/>
<rect x="1123" y="528.5" width="4.6" height="2.6" fill="#e6e8f3"/>
<rect x="471.7" y="535" width="67.3" height="9.5" fill="#962639"/>
<path d="M482.3 536.8V541M484.5 536.8V541M486.7 536.8V541M488.9 536.8V541M491.1 536.8V541M494.6 536.8V541M496.8 536.8V541M499 536.8V541M501.2 536.8V541M503.4 536.8V541M507 536.8V541M509.2 536.8V541M511.4 536.8V541M513.6 536.8V541M515.8 536.8V541M519.3 536.8V541M521.5 536.8V541M523.7 536.8V541M525.9 536.8V541M528.1 536.8V541" fill="none" stroke="#fdeff0" stroke-width="1.3"/>
<rect x="484.2" y="525.8" width="4.6" height="6.7" fill="#e6e8f3"/>
<rect x="522" y="525.8" width="4.6" height="6.7" fill="#e6e8f3"/>
<rect x="494.7" y="530" width="5.5" height="2.3" fill="#e6e8f3"/>
<rect x="506.7" y="530" width="5.5" height="2.3" fill="#e6e8f3"/>
<rect x="471.7" y="544.5" width="67.3" height="44.5" fill="#c43e48"/>
<rect x="471.7" y="543.6" width="67.3" height="1.6" fill="#f0bcc0"/>
<rect x="471.9" y="545" width="1.9" height="41.5" fill="#f8f5f8"/>
<rect x="471.3" y="585.3" width="3.1" height="2" fill="#f8f5f8"/>
<rect x="474.6" y="545.6" width="7.7" height="13.8" fill="#e6e8f3"/>
<rect x="474.6" y="564.4" width="7.7" height="18.6" fill="#e6e8f3"/>
<rect x="483.1" y="545" width="1.9" height="41.5" fill="#f8f5f8"/>
<rect x="482.5" y="585.3" width="3.1" height="2" fill="#f8f5f8"/>
<rect x="485.8" y="545.6" width="7.7" height="13.8" fill="#e6e8f3"/>
<rect x="485.8" y="564.4" width="7.7" height="18.6" fill="#e6e8f3"/>
<rect x="494.3" y="545" width="1.9" height="41.5" fill="#f8f5f8"/>
<rect x="493.7" y="585.3" width="3.1" height="2" fill="#f8f5f8"/>
<rect x="497" y="545.6" width="7.7" height="13.8" fill="#e6e8f3"/>
<rect x="497" y="564.4" width="7.7" height="18.6" fill="#e6e8f3"/>
<rect x="505.6" y="545" width="1.9" height="41.5" fill="#f8f5f8"/>
<rect x="505" y="585.3" width="3.1" height="2" fill="#f8f5f8"/>
<rect x="508.2" y="545.6" width="7.7" height="13.8" fill="#e6e8f3"/>
<rect x="508.2" y="564.4" width="7.7" height="18.6" fill="#e6e8f3"/>
<rect x="516.8" y="545" width="1.9" height="41.5" fill="#f8f5f8"/>
<rect x="516.2" y="585.3" width="3.1" height="2" fill="#f8f5f8"/>
<rect x="519.5" y="545.6" width="7.7" height="13.8" fill="#e6e8f3"/>
<rect x="519.5" y="564.4" width="7.7" height="18.6" fill="#e6e8f3"/>
<rect x="528" y="545" width="1.9" height="41.5" fill="#f8f5f8"/>
<rect x="527.4" y="585.3" width="3.1" height="2" fill="#f8f5f8"/>
<rect x="530.7" y="545.6" width="7.7" height="13.8" fill="#e6e8f3"/>
<rect x="530.7" y="564.4" width="7.7" height="18.6" fill="#e6e8f3"/>
<rect x="537.8" y="545" width="1.6" height="41.5" fill="#f8f5f8"/>
<rect x="471.7" y="587.4" width="67.3" height="2" fill="#f6dadc"/>
<rect x="471.7" y="589.4" width="67.3" height="23.4" fill="url(#gs)"/>
<path d="M475.3 612V594.5A3 3 0 0 1 481.3 594.5V612Z" fill="#e6e8f3"/>
<path d="M486.5 612V594.5A3 3 0 0 1 492.5 594.5V612Z" fill="#e6e8f3"/>
<path d="M497.7 612V594.5A3 3 0 0 1 503.7 594.5V612Z" fill="#e6e8f3"/>
<path d="M509 612V594.5A3 3 0 0 1 515 594.5V612Z" fill="#e6e8f3"/>
<path d="M520.2 612V594.5A3 3 0 0 1 526.2 594.5V612Z" fill="#e6e8f3"/>
<path d="M531.4 612V594.5A3 3 0 0 1 537.4 594.5V612Z" fill="#e6e8f3"/>
<rect x="570" y="535" width="80" height="9.5" fill="#962639"/>
<path d="M580.6 536.8V541M582.8 536.8V541M585 536.8V541M587.2 536.8V541M589.4 536.8V541M596.1 536.8V541M598.3 536.8V541M600.5 536.8V541M602.7 536.8V541M604.9 536.8V541M611.6 536.8V541M613.8 536.8V541M616 536.8V541M618.2 536.8V541M620.4 536.8V541M627.1 536.8V541M629.3 536.8V541M631.5 536.8V541M633.7 536.8V541M635.9 536.8V541" fill="none" stroke="#fdeff0" stroke-width="1.3"/>
<rect x="582.5" y="525.8" width="4.6" height="6.7" fill="#e6e8f3"/>
<rect x="633" y="525.8" width="4.6" height="6.7" fill="#e6e8f3"/>
<rect x="593" y="530" width="5.5" height="2.3" fill="#e6e8f3"/>
<rect x="605" y="530" width="5.5" height="2.3" fill="#e6e8f3"/>
<rect x="617" y="530" width="5.5" height="2.3" fill="#e6e8f3"/>
<rect x="570" y="544.5" width="80" height="44.5" fill="#c43e48"/>
<rect x="570" y="543.6" width="80" height="1.6" fill="#f0bcc0"/>
<rect x="570.2" y="545" width="1.9" height="41.5" fill="#f8f5f8"/>
<rect x="569.6" y="585.3" width="3.1" height="2" fill="#f8f5f8"/>
<rect x="572.9" y="545.6" width="7.7" height="13.8" fill="#e6e8f3"/>
<rect x="572.9" y="564.4" width="7.7" height="18.6" fill="#e6e8f3"/>
<rect x="581.6" y="545" width="1.9" height="41.5" fill="#f8f5f8"/>
<rect x="581" y="585.3" width="3.1" height="2" fill="#f8f5f8"/>
<rect x="584.3" y="545.6" width="7.7" height="13.8" fill="#e6e8f3"/>
<rect x="584.3" y="564.4" width="7.7" height="18.6" fill="#e6e8f3"/>
<rect x="593.1" y="545" width="1.9" height="41.5" fill="#f8f5f8"/>
<rect x="592.5" y="585.3" width="3.1" height="2" fill="#f8f5f8"/>
<rect x="595.8" y="545.6" width="7.7" height="13.8" fill="#e6e8f3"/>
<rect x="595.8" y="564.4" width="7.7" height="18.6" fill="#e6e8f3"/>
<rect x="604.5" y="545" width="1.9" height="41.5" fill="#f8f5f8"/>
<rect x="603.9" y="585.3" width="3.1" height="2" fill="#f8f5f8"/>
<rect x="607.2" y="545.6" width="7.7" height="13.8" fill="#e6e8f3"/>
<rect x="607.2" y="564.4" width="7.7" height="18.6" fill="#e6e8f3"/>
<rect x="615.9" y="545" width="1.9" height="41.5" fill="#f8f5f8"/>
<rect x="615.3" y="585.3" width="3.1" height="2" fill="#f8f5f8"/>
<rect x="618.6" y="545.6" width="7.7" height="13.8" fill="#e6e8f3"/>
<rect x="618.6" y="564.4" width="7.7" height="18.6" fill="#e6e8f3"/>
<rect x="627.3" y="545" width="1.9" height="41.5" fill="#f8f5f8"/>
<rect x="626.7" y="585.3" width="3.1" height="2" fill="#f8f5f8"/>
<rect x="630" y="545.6" width="7.7" height="13.8" fill="#e6e8f3"/>
<rect x="630" y="564.4" width="7.7" height="18.6" fill="#e6e8f3"/>
<rect x="638.8" y="545" width="1.9" height="41.5" fill="#f8f5f8"/>
<rect x="638.2" y="585.3" width="3.1" height="2" fill="#f8f5f8"/>
<rect x="641.5" y="545.6" width="7.7" height="13.8" fill="#e6e8f3"/>
<rect x="641.5" y="564.4" width="7.7" height="18.6" fill="#e6e8f3"/>
<rect x="648.8" y="545" width="1.6" height="41.5" fill="#f8f5f8"/>
<rect x="570" y="587.4" width="80" height="2" fill="#f6dadc"/>
<rect x="570" y="589.4" width="80" height="23.4" fill="url(#gs)"/>
<path d="M573.7 612V594.5A3 3 0 0 1 579.7 594.5V612Z" fill="#e6e8f3"/>
<path d="M585.1 612V594.5A3 3 0 0 1 591.1 594.5V612Z" fill="#e6e8f3"/>
<path d="M596.6 612V594.5A3 3 0 0 1 602.6 594.5V612Z" fill="#e6e8f3"/>
<path d="M608 612V594.5A3 3 0 0 1 614 594.5V612Z" fill="#e6e8f3"/>
<path d="M619.4 612V594.5A3 3 0 0 1 625.4 594.5V612Z" fill="#e6e8f3"/>
<path d="M631.4 613.5V605.5A9.5 9.5 0 0 1 650.4 605.5V613.5Z" fill="#f3c9cc"/>
<path d="M632.2 613.5V605.5A8.7 8.7 0 0 1 649.6 605.5V613.5Z" fill="#6b2133"/>
<rect x="800" y="535" width="67.5" height="9.5" fill="#962639"/>
<path d="M810.6 536.8V541M812.8 536.8V541M815 536.8V541M817.2 536.8V541M819.4 536.8V541M823 536.8V541M825.2 536.8V541M827.4 536.8V541M829.6 536.8V541M831.8 536.8V541M835.4 536.8V541M837.6 536.8V541M839.8 536.8V541M842 536.8V541M844.1 536.8V541M847.7 536.8V541M849.9 536.8V541M852.1 536.8V541M854.3 536.8V541M856.5 536.8V541" fill="none" stroke="#fdeff0" stroke-width="1.3"/>
<rect x="812.5" y="525.8" width="4.6" height="6.7" fill="#e6e8f3"/>
<rect x="850.5" y="525.8" width="4.6" height="6.7" fill="#e6e8f3"/>
<rect x="823" y="530" width="5.5" height="2.3" fill="#e6e8f3"/>
<rect x="835" y="530" width="5.5" height="2.3" fill="#e6e8f3"/>
<rect x="800" y="544.5" width="67.5" height="44.5" fill="#c43e48"/>
<rect x="800" y="543.6" width="67.5" height="1.6" fill="#f0bcc0"/>
<rect x="800.2" y="545" width="1.9" height="41.5" fill="#f8f5f8"/>
<rect x="799.6" y="585.3" width="3.1" height="2" fill="#f8f5f8"/>
<rect x="802.9" y="545.6" width="7.7" height="13.8" fill="#e6e8f3"/>
<rect x="802.9" y="564.4" width="7.7" height="18.6" fill="#e6e8f3"/>
<rect x="811.5" y="545" width="1.9" height="41.5" fill="#f8f5f8"/>
<rect x="810.9" y="585.3" width="3.1" height="2" fill="#f8f5f8"/>
<rect x="814.1" y="545.6" width="7.7" height="13.8" fill="#e6e8f3"/>
<rect x="814.1" y="564.4" width="7.7" height="18.6" fill="#e6e8f3"/>
<rect x="822.7" y="545" width="1.9" height="41.5" fill="#f8f5f8"/>
<rect x="822.1" y="585.3" width="3.1" height="2" fill="#f8f5f8"/>
<rect x="825.4" y="545.6" width="7.7" height="13.8" fill="#e6e8f3"/>
<rect x="825.4" y="564.4" width="7.7" height="18.6" fill="#e6e8f3"/>
<rect x="834" y="545" width="1.9" height="41.5" fill="#f8f5f8"/>
<rect x="833.4" y="585.3" width="3.1" height="2" fill="#f8f5f8"/>
<rect x="836.6" y="545.6" width="7.7" height="13.8" fill="#e6e8f3"/>
<rect x="836.6" y="564.4" width="7.7" height="18.6" fill="#e6e8f3"/>
<rect x="845.2" y="545" width="1.9" height="41.5" fill="#f8f5f8"/>
<rect x="844.6" y="585.3" width="3.1" height="2" fill="#f8f5f8"/>
<rect x="847.9" y="545.6" width="7.7" height="13.8" fill="#e6e8f3"/>
<rect x="847.9" y="564.4" width="7.7" height="18.6" fill="#e6e8f3"/>
<rect x="856.5" y="545" width="1.9" height="41.5" fill="#f8f5f8"/>
<rect x="855.9" y="585.3" width="3.1" height="2" fill="#f8f5f8"/>
<rect x="859.1" y="545.6" width="7.7" height="13.8" fill="#e6e8f3"/>
<rect x="859.1" y="564.4" width="7.7" height="18.6" fill="#e6e8f3"/>
<rect x="866.3" y="545" width="1.6" height="41.5" fill="#f8f5f8"/>
<rect x="800" y="587.4" width="67.5" height="2" fill="#f6dadc"/>
<rect x="800" y="589.4" width="67.5" height="23.4" fill="url(#gs)"/>
<path d="M803.6 612V594.5A3 3 0 0 1 809.6 594.5V612Z" fill="#e6e8f3"/>
<path d="M814.9 612V594.5A3 3 0 0 1 820.9 594.5V612Z" fill="#e6e8f3"/>
<path d="M826.1 612V594.5A3 3 0 0 1 832.1 594.5V612Z" fill="#e6e8f3"/>
<path d="M837.4 612V594.5A3 3 0 0 1 843.4 594.5V612Z" fill="#e6e8f3"/>
<path d="M850.5 612V599.5A6.5 6.5 0 0 1 863.5 599.5V612Z" fill="#e6e8f3"/>
<rect x="898.3" y="535" width="67.5" height="9.5" fill="#962639"/>
<path d="M908.9 536.8V541M911.1 536.8V541M913.3 536.8V541M915.5 536.8V541M917.7 536.8V541M921.3 536.8V541M923.5 536.8V541M925.7 536.8V541M927.9 536.8V541M930.1 536.8V541M933.6 536.8V541M935.9 536.8V541M938 536.8V541M940.2 536.8V541M942.4 536.8V541M946 536.8V541M948.2 536.8V541M950.4 536.8V541M952.6 536.8V541M954.8 536.8V541" fill="none" stroke="#fdeff0" stroke-width="1.3"/>
<rect x="910.8" y="525.8" width="4.6" height="6.7" fill="#e6e8f3"/>
<rect x="948.8" y="525.8" width="4.6" height="6.7" fill="#e6e8f3"/>
<rect x="921.3" y="530" width="5.5" height="2.3" fill="#e6e8f3"/>
<rect x="933.3" y="530" width="5.5" height="2.3" fill="#e6e8f3"/>
<rect x="898.3" y="544.5" width="67.5" height="44.5" fill="#c43e48"/>
<rect x="898.3" y="543.6" width="67.5" height="1.6" fill="#f0bcc0"/>
<rect x="898.5" y="545" width="1.9" height="41.5" fill="#f8f5f8"/>
<rect x="897.9" y="585.3" width="3.1" height="2" fill="#f8f5f8"/>
<rect x="901.2" y="545.6" width="7.7" height="13.8" fill="#e6e8f3"/>
<rect x="901.2" y="564.4" width="7.7" height="18.6" fill="#e6e8f3"/>
<rect x="909.8" y="545" width="1.9" height="41.5" fill="#f8f5f8"/>
<rect x="909.1" y="585.3" width="3.1" height="2" fill="#f8f5f8"/>
<rect x="912.4" y="545.6" width="7.7" height="13.8" fill="#e6e8f3"/>
<rect x="912.4" y="564.4" width="7.7" height="18.6" fill="#e6e8f3"/>
<rect x="921" y="545" width="1.9" height="41.5" fill="#f8f5f8"/>
<rect x="920.4" y="585.3" width="3.1" height="2" fill="#f8f5f8"/>
<rect x="923.7" y="545.6" width="7.7" height="13.8" fill="#e6e8f3"/>
<rect x="923.7" y="564.4" width="7.7" height="18.6" fill="#e6e8f3"/>
<rect x="932.2" y="545" width="1.9" height="41.5" fill="#f8f5f8"/>
<rect x="931.6" y="585.3" width="3.1" height="2" fill="#f8f5f8"/>
<rect x="934.9" y="545.6" width="7.7" height="13.8" fill="#e6e8f3"/>
<rect x="934.9" y="564.4" width="7.7" height="18.6" fill="#e6e8f3"/>
<rect x="943.5" y="545" width="1.9" height="41.5" fill="#f8f5f8"/>
<rect x="942.9" y="585.3" width="3.1" height="2" fill="#f8f5f8"/>
<rect x="946.2" y="545.6" width="7.7" height="13.8" fill="#e6e8f3"/>
<rect x="946.2" y="564.4" width="7.7" height="18.6" fill="#e6e8f3"/>
<rect x="954.8" y="545" width="1.9" height="41.5" fill="#f8f5f8"/>
<rect x="954.1" y="585.3" width="3.1" height="2" fill="#f8f5f8"/>
<rect x="957.4" y="545.6" width="7.7" height="13.8" fill="#e6e8f3"/>
<rect x="957.4" y="564.4" width="7.7" height="18.6" fill="#e6e8f3"/>
<rect x="964.6" y="545" width="1.6" height="41.5" fill="#f8f5f8"/>
<rect x="898.3" y="587.4" width="67.5" height="2" fill="#f6dadc"/>
<rect x="898.3" y="589.4" width="67.5" height="23.4" fill="url(#gs)"/>
<path d="M901.9 612V594.5A3 3 0 0 1 907.9 594.5V612Z" fill="#e6e8f3"/>
<path d="M913.2 612V594.5A3 3 0 0 1 919.2 594.5V612Z" fill="#e6e8f3"/>
<path d="M924.4 612V594.5A3 3 0 0 1 930.4 594.5V612Z" fill="#e6e8f3"/>
<path d="M935.7 612V594.5A3 3 0 0 1 941.7 594.5V612Z" fill="#e6e8f3"/>
<path d="M946.9 612V594.5A3 3 0 0 1 952.9 594.5V612Z" fill="#e6e8f3"/>
<path d="M958.2 612V594.5A3 3 0 0 1 964.2 594.5V612Z" fill="#e6e8f3"/>
<polygon points="671,533 703.7,499 745.7,499 778.5,533" fill="#363850"/>
<path d="M671 533L703.7 499M778.5 533L745.7 499" fill="none" stroke="#6d2e48" stroke-width="1.6"/>
<rect x="703.7" y="494" width="42" height="5.2" fill="#8f3350"/>
<path d="M706.7 495.2V498.2M709.7 495.2V498.2M712.7 495.2V498.2M715.7 495.2V498.2M718.7 495.2V498.2M721.7 495.2V498.2M724.7 495.2V498.2M727.7 495.2V498.2M730.7 495.2V498.2M733.7 495.2V498.2M736.7 495.2V498.2M739.7 495.2V498.2M742.7 495.2V498.2" fill="none" stroke="#fbe4e6" stroke-width="1.5"/>
<path d="M703.4 494L704.7 484L706 494Z" fill="#8f3350"/>
<path d="M743.4 494L744.7 484L746 494Z" fill="#8f3350"/>
<rect x="704.7" y="510.8" width="6.6" height="7.5" fill="#e6e8f3"/>
<rect x="737.3" y="510.8" width="6.6" height="7.5" fill="#e6e8f3"/>
<path d="M712.7 535V530A12 12 0 0 1 736.7 530V535Z" fill="#b9333d"/>
<path d="M719.1 531.7L715.7 531.7M719.5 529.6L716.4 528.3M720.7 527.7L718.3 525.3M722.6 526.5L721.3 523.4M724.7 526.1L724.7 522.7M726.8 526.5L728.1 523.4M728.7 527.7L731.1 525.3M729.9 529.6L733 528.3M730.3 531.7L733.7 531.7" fill="none" stroke="#fbe4e6" stroke-width="1.2"/>
<circle cx="724.7" cy="531.7" r="4.2" fill="#f8f5f8"/>
<circle cx="724.7" cy="531.7" r="1.6" fill="#b9333d"/>
<rect x="672" y="533" width="105.5" height="56" fill="#c43e48"/>
<rect x="672" y="533" width="105.5" height="4" fill="#9e2a3a"/>
<rect x="672" y="537.5" width="30.5" height="4.2" fill="#f8f5f8"/>
<rect x="747" y="537.5" width="30.5" height="4.2" fill="#f8f5f8"/>
<rect x="672.5" y="544" width="6.8" height="16" fill="#e6e8f3"/>
<rect x="672.5" y="564" width="6.8" height="18.5" fill="#e6e8f3"/>
<rect x="683.2" y="544" width="6.8" height="16" fill="#e6e8f3"/>
<rect x="683.2" y="564" width="6.8" height="18.5" fill="#e6e8f3"/>
<rect x="694" y="544" width="6.8" height="16" fill="#e6e8f3"/>
<rect x="694" y="564" width="6.8" height="18.5" fill="#e6e8f3"/>
<rect x="748.3" y="544" width="6.8" height="16" fill="#e6e8f3"/>
<rect x="748.3" y="564" width="6.8" height="18.5" fill="#e6e8f3"/>
<rect x="759.1" y="544" width="6.8" height="16" fill="#e6e8f3"/>
<rect x="759.1" y="564" width="6.8" height="18.5" fill="#e6e8f3"/>
<rect x="769.9" y="544" width="6.8" height="16" fill="#e6e8f3"/>
<rect x="769.9" y="564" width="6.8" height="18.5" fill="#e6e8f3"/>
<rect x="672" y="561.2" width="31" height="1.2" fill="#e37f88"/>
<rect x="746.5" y="561.2" width="31" height="1.2" fill="#e37f88"/>
<rect x="705.7" y="534" width="5.2" height="30" fill="#f8f5f8"/>
<circle cx="708.3" cy="564" r="2.6" fill="#f8f5f8"/>
<circle cx="708.3" cy="537" r="1.1" fill="#5b2030"/>
<rect x="704.2" y="534" width="8.2" height="2.3" fill="#f8f5f8"/>
<rect x="738.5" y="534" width="5.2" height="30" fill="#f8f5f8"/>
<circle cx="741.1" cy="564" r="2.6" fill="#f8f5f8"/>
<circle cx="741.1" cy="537" r="1.1" fill="#5b2030"/>
<rect x="737" y="534" width="8.2" height="2.3" fill="#f8f5f8"/>
<rect x="712.4" y="546" width="4" height="32" fill="url(#qs)"/>
<rect x="733" y="546" width="4" height="32" fill="url(#qs)"/>
<path d="M716.4 580V544.5Q724.7 541 733 544.5V580Z" fill="#7d2436"/>
<path d="M717.7 580V545.3Q724.7 542.3 731.7 545.3V580Z" fill="#d6d9ea"/>
<path d="M717.2 560.5Q721.7 563.5 724.7 562Q727.7 563.5 732.2 560.5V566.5Q727.7 564.5 724.7 566Q721.7 564.5 717.2 566.5Z" fill="#7d2436"/>
<rect x="672" y="587.4" width="105.5" height="2" fill="#f6dadc"/>
<rect x="672" y="589.4" width="105.5" height="23.4" fill="url(#gs)"/>
<path d="M671 612V596.3A4.6 4.6 0 0 1 680.2 596.3V612Z" fill="#e6e8f3"/>
<rect x="675.2" y="592" width="0.8" height="20" fill="#e9a4aa"/>
<path d="M682 612V596.3A4.6 4.6 0 0 1 691.2 596.3V612Z" fill="#e6e8f3"/>
<rect x="686.2" y="592" width="0.8" height="20" fill="#e9a4aa"/>
<path d="M693 612V596.3A4.6 4.6 0 0 1 702.2 596.3V612Z" fill="#e6e8f3"/>
<rect x="697.2" y="592" width="0.8" height="20" fill="#e9a4aa"/>
<path d="M746.7 612V596.3A4.6 4.6 0 0 1 755.9 596.3V612Z" fill="#e6e8f3"/>
<rect x="750.9" y="592" width="0.8" height="20" fill="#e9a4aa"/>
<path d="M758 612V596.3A4.6 4.6 0 0 1 767.2 596.3V612Z" fill="#e6e8f3"/>
<rect x="762.2" y="592" width="0.8" height="20" fill="#e9a4aa"/>
<path d="M769 612V596.3A4.6 4.6 0 0 1 778.2 596.3V612Z" fill="#e6e8f3"/>
<rect x="773.2" y="592" width="0.8" height="20" fill="#e9a4aa"/>
<path d="M707.5 592.5V583Q712.7 577 724.7 581Q736.7 577 741.9 583V592.5Z" fill="#fbf0f0"/>
<rect x="707.5" y="592.5" width="8" height="21" fill="url(#gs)"/>
<rect x="733.9" y="592.5" width="8" height="21" fill="url(#gs)"/>
<rect x="715" y="594" width="19.4" height="23" fill="#fbf0f0"/>
<rect x="717.2" y="596.5" width="15" height="20.5" fill="#f3dfe1"/>
<path d="M718.2 597.5H731.2V601Q727.7 604.5 724.7 602Q721.7 604.5 718.2 601Z" fill="#7d2436"/>
<polygon points="536.5,526 547.5,512 561.5,512 572.5,526" fill="#5e2b45"/>
<path d="M543.5 526C549.5 518 551.5 512 553.7 503L554.5 496.7L555.3 503C557.5 512 559.5 518 565.5 526Z" fill="#b23446"/>
<rect x="539" y="526.5" width="31" height="18" fill="#f8f5f8"/>
<ellipse cx="554.5" cy="527" rx="7.5" ry="4.2" fill="#f8f5f8"/>
<rect x="549.3" y="532.5" width="2.6" height="6" fill="#dfe3f0"/>
<rect x="553.2" y="532.5" width="2.6" height="6" fill="#dfe3f0"/>
<rect x="557.1" y="532.5" width="2.6" height="6" fill="#dfe3f0"/>
<rect x="543.5" y="541" width="22" height="2" fill="#c8434d"/>
<rect x="539" y="544.5" width="31" height="44.5" fill="#c43e48"/>
<rect x="539" y="546" width="6" height="42" fill="url(#qs)"/>
<rect x="564" y="546" width="6" height="42" fill="url(#qs)"/>
<rect x="545.2" y="546.5" width="6.6" height="12" fill="#e6e8f3"/>
<path d="M545.2 582V566.3A3.3 3.3 0 0 1 551.8 566.3V582Z" fill="#e6e8f3"/>
<rect x="557.2" y="546.5" width="6.6" height="12" fill="#e6e8f3"/>
<path d="M557.2 582V566.3A3.3 3.3 0 0 1 563.8 566.3V582Z" fill="#e6e8f3"/>
<rect x="539" y="587.4" width="31" height="2" fill="#f6dadc"/>
<rect x="539" y="589.4" width="31" height="23.4" fill="url(#gs)"/>
<rect x="553.8" y="589.4" width="1.4" height="7" fill="#f6dadc"/>
<path d="M543.2 614V607.3A11.3 11.3 0 0 1 565.8 607.3V614Z" fill="#fbeef0"/>
<path d="M544.2 614V607.3A10.3 10.3 0 0 1 564.8 607.3V614Z" fill="#b3b3b0"/>
<polygon points="865,526 875.9,512 889.9,512 900.8,526" fill="#5e2b45"/>
<path d="M871.9 526C877.9 518 879.9 512 882.1 503L882.9 496.7L883.7 503C885.9 512 887.9 518 893.9 526Z" fill="#b23446"/>
<rect x="867.5" y="526.5" width="30.8" height="18" fill="#f8f5f8"/>
<ellipse cx="882.9" cy="527" rx="7.5" ry="4.2" fill="#f8f5f8"/>
<rect x="877.7" y="532.5" width="2.6" height="6" fill="#dfe3f0"/>
<rect x="881.6" y="532.5" width="2.6" height="6" fill="#dfe3f0"/>
<rect x="885.5" y="532.5" width="2.6" height="6" fill="#dfe3f0"/>
<rect x="872" y="541" width="21.8" height="2" fill="#c8434d"/>
<rect x="867.5" y="544.5" width="30.8" height="44.5" fill="#c43e48"/>
<rect x="867.5" y="546" width="6" height="42" fill="url(#qs)"/>
<rect x="892.3" y="546" width="6" height="42" fill="url(#qs)"/>
<rect x="873.7" y="546.5" width="6.6" height="12" fill="#e6e8f3"/>
<path d="M873.7 582V566.3A3.3 3.3 0 0 1 880.3 566.3V582Z" fill="#e6e8f3"/>
<rect x="885.5" y="546.5" width="6.6" height="12" fill="#e6e8f3"/>
<path d="M885.5 582V566.3A3.3 3.3 0 0 1 892.1 566.3V582Z" fill="#e6e8f3"/>
<rect x="867.5" y="587.4" width="30.8" height="2" fill="#f6dadc"/>
<rect x="867.5" y="589.4" width="30.8" height="23.4" fill="url(#gs)"/>
<rect x="882.2" y="589.4" width="1.4" height="7" fill="#f6dadc"/>
<path d="M871.6 614V607.3A11.3 11.3 0 0 1 894.2 607.3V614Z" fill="#fbeef0"/>
<path d="M872.6 614V607.3A10.3 10.3 0 0 1 893.2 607.3V614Z" fill="#6b2133"/>
<path d="M653 526.5C655 522 658.5 517 660.4 512.5L661 505L661.6 512.5C663.5 517 667 522 669 526.5Z" fill="#b23446"/>
<rect x="650" y="526" width="22" height="20" fill="#f8f5f8"/>
<rect x="655.8" y="530" width="2.6" height="7.5" fill="#e3e6f1"/>
<rect x="659.7" y="530" width="2.6" height="7.5" fill="#e3e6f1"/>
<rect x="663.6" y="530" width="2.6" height="7.5" fill="#e3e6f1"/>
<rect x="650" y="546" width="22" height="43" fill="url(#qs)"/>
<rect x="657.5" y="545" width="7" height="15" fill="#f8f5f8"/>
<path d="M657.7 582V565.8A3.3 3.3 0 0 1 664.3 565.8V582Z" fill="#e6e8f3"/>
<circle cx="653.5" cy="584.5" r="1.6" fill="#f8f5f8"/>
<circle cx="668.5" cy="584.5" r="1.6" fill="#f8f5f8"/>
<rect x="650" y="587.4" width="22" height="2" fill="#f6dadc"/>
<rect x="650" y="589.4" width="22" height="23.4" fill="url(#gs)"/>
<rect x="657.7" y="590" width="6.6" height="15.5" fill="#e6e8f3"/>
<path d="M780.5 526.5C782.6 522 786.1 517 788 512.5L788.6 505L789.2 512.5C791.1 517 794.6 522 796.8 526.5Z" fill="#b23446"/>
<rect x="777.5" y="526" width="22.3" height="20" fill="#f8f5f8"/>
<rect x="783.4" y="530" width="2.6" height="7.5" fill="#e3e6f1"/>
<rect x="787.4" y="530" width="2.6" height="7.5" fill="#e3e6f1"/>
<rect x="791.2" y="530" width="2.6" height="7.5" fill="#e3e6f1"/>
<rect x="777.5" y="546" width="22.3" height="43" fill="url(#qs)"/>
<rect x="785.1" y="545" width="7" height="15" fill="#f8f5f8"/>
<path d="M785.4 582V565.8A3.3 3.3 0 0 1 792 565.8V582Z" fill="#e6e8f3"/>
<circle cx="781" cy="584.5" r="1.6" fill="#f8f5f8"/>
<circle cx="796.3" cy="584.5" r="1.6" fill="#f8f5f8"/>
<rect x="777.5" y="587.4" width="22.3" height="2" fill="#f6dadc"/>
<rect x="777.5" y="589.4" width="22.3" height="23.4" fill="url(#gs)"/>
<rect x="785.4" y="590" width="6.6" height="15.5" fill="#e6e8f3"/>
<rect x="294" y="538" width="36" height="51" fill="#b5303a"/>
<rect x="294" y="541.5" width="36" height="1.4" fill="#e9a4aa"/>
<rect x="294" y="559.3" width="36" height="1.6" fill="#f0bcc0"/>
<rect x="294" y="582.5" width="36" height="1.6" fill="#e9a4aa"/>
<rect x="296.2" y="545" width="6.4" height="13" fill="#e6e8f3"/>
<rect x="296.2" y="563.5" width="6.4" height="17.5" fill="#e6e8f3"/>
<rect x="304" y="543" width="1.2" height="40" fill="#f0bcc0"/>
<rect x="308.2" y="545" width="6.4" height="13" fill="#e6e8f3"/>
<rect x="308.2" y="563.5" width="6.4" height="17.5" fill="#e6e8f3"/>
<rect x="316" y="543" width="1.2" height="40" fill="#f0bcc0"/>
<rect x="320.2" y="545" width="6.4" height="13" fill="#e6e8f3"/>
<rect x="320.2" y="563.5" width="6.4" height="17.5" fill="#e6e8f3"/>
<rect x="328" y="543" width="1.2" height="40" fill="#f0bcc0"/>
<rect x="294" y="587.4" width="36" height="2" fill="#e9a4aa"/>
<rect x="294" y="589.4" width="36" height="23.4" fill="url(#gs)"/>
<rect x="297.4" y="594.4" width="4.7" height="17" fill="#f3c9cc"/>
<rect x="298" y="595" width="3.5" height="16" fill="#6b2133"/>
<rect x="307.4" y="590.4" width="8.2" height="21" fill="#f3c9cc"/>
<rect x="308" y="591" width="7" height="20" fill="#6b2133"/>
<rect x="1107.3" y="538" width="35.2" height="51" fill="#b5303a"/>
<rect x="1107.3" y="541.5" width="35.2" height="1.4" fill="#e9a4aa"/>
<rect x="1107.3" y="559.3" width="35.2" height="1.6" fill="#f0bcc0"/>
<rect x="1107.3" y="582.5" width="35.2" height="1.6" fill="#e9a4aa"/>
<rect x="1109.5" y="545" width="6.4" height="13" fill="#e6e8f3"/>
<rect x="1109.5" y="563.5" width="6.4" height="17.5" fill="#e6e8f3"/>
<rect x="1117.3" y="543" width="1.2" height="40" fill="#f0bcc0"/>
<rect x="1121.2" y="545" width="6.4" height="13" fill="#e6e8f3"/>
<rect x="1121.2" y="563.5" width="6.4" height="17.5" fill="#e6e8f3"/>
<rect x="1129" y="543" width="1.2" height="40" fill="#f0bcc0"/>
<rect x="1133" y="545" width="6.4" height="13" fill="#e6e8f3"/>
<rect x="1133" y="563.5" width="6.4" height="17.5" fill="#e6e8f3"/>
<rect x="1140.8" y="543" width="1.2" height="40" fill="#f0bcc0"/>
<rect x="1107.3" y="587.4" width="35.2" height="2" fill="#e9a4aa"/>
<rect x="1107.3" y="589.4" width="35.2" height="23.4" fill="url(#gs)"/>
<rect x="1134.4" y="594.4" width="4.7" height="17" fill="#f3c9cc"/>
<rect x="1135" y="595" width="3.5" height="16" fill="#6b2133"/>
<rect x="1120.9" y="590.4" width="8.2" height="21" fill="#f3c9cc"/>
<rect x="1121.5" y="591" width="7" height="20" fill="#6b2133"/>
<path d="M367.2 504.5C367.2 497 371.4 491 380.4 487.6C386.4 485.9 393.4 485.6 400.4 485.6C407.4 485.6 414.4 485.9 420.4 487.6C429.4 491 433.6 497 433.6 504.5Z" fill="#363850"/>
<path d="M392.8 488.6Q387.8 496 386.8 504M408 488.6Q413 496 414 504" fill="none" stroke="#96506a" stroke-width="1.5"/>
<path d="M380.9 489.4Q390.4 485.2 395.9 484.4Q398.8 483.8 399.6 482L400.4 473.6L401.2 482Q402 483.8 404.9 484.4Q410.4 485.2 419.9 489.4Q400.4 487.2 380.9 489.4Z" fill="#a5455d"/>
<rect x="378" y="494.5" width="3.4" height="4.6" fill="#e6e8f3"/>
<circle cx="400.4" cy="497.5" r="2.2" fill="#e6e8f3"/>
<rect x="419.4" y="494.5" width="3.4" height="4.6" fill="#e6e8f3"/>
<rect x="366.6" y="503.4" width="67.6" height="2.8" fill="#2b2135"/>
<rect x="366.6" y="506.2" width="67.6" height="2.4" fill="#8e3a52"/>
<rect x="366.6" y="508.4" width="67.6" height="9" fill="#ab3a4e"/>
<rect x="370.9" y="509" width="10" height="7" fill="#e6e8f3"/>
<rect x="373.8" y="509" width="0.8" height="7" fill="#a8405a"/>
<rect x="377.2" y="509" width="0.8" height="7" fill="#a8405a"/>
<rect x="394.1" y="509" width="12.6" height="7" fill="#e6e8f3"/>
<rect x="396.8" y="509" width="0.8" height="7" fill="#a8405a"/>
<rect x="400" y="509" width="0.8" height="7" fill="#a8405a"/>
<rect x="403.1" y="509" width="0.8" height="7" fill="#a8405a"/>
<rect x="419.1" y="509" width="10" height="7" fill="#e6e8f3"/>
<rect x="422" y="509" width="0.8" height="7" fill="#a8405a"/>
<rect x="425.4" y="509" width="0.8" height="7" fill="#a8405a"/>
<rect x="365.2" y="516.9" width="70.6" height="2.4" fill="#dc98a6"/>
<rect x="329.8" y="531.5" width="141.9" height="57.5" fill="#b5303a"/>
<rect x="329.8" y="531.3" width="141.9" height="4" fill="#a63c50"/>
<rect x="364.9" y="520.8" width="5" height="5" fill="#e6e8f3"/>
<rect x="430.9" y="520.8" width="5" height="5" fill="#e6e8f3"/>
<path d="M388.9 545V531A11.5 11.5 0 0 1 411.9 531V545Z" fill="#b82f3a"/>
<path d="M390.1 545V531A10.3 10.3 0 0 1 410.7 531V545" fill="none" stroke="#fbe4e6" stroke-width="1.7" stroke-dasharray="2 1.1"/>
<circle cx="400.4" cy="530.3" r="3.2" fill="#f8f5f8"/>
<circle cx="400.4" cy="530.3" r="1.1" fill="#c43e48"/>
<rect x="370.6" y="532" width="5" height="37" fill="#f8f5f8"/>
<rect x="425" y="532" width="5" height="37" fill="#f8f5f8"/>
<rect x="372.4" y="569" width="1.4" height="17" fill="#f0bcc0"/>
<rect x="426.8" y="569" width="1.4" height="17" fill="#f0bcc0"/>
<path d="M341.9 534V586M386.9 534V586M413.9 534V586M458.9 534V586" fill="none" stroke="#f6d3d6" stroke-width="1.1" stroke-dasharray="1 2.2"/>
<rect x="342.2" y="544.5" width="18.6" height="17.3" fill="#f8f5f8"/>
<path d="M343.3 560.4V544A2.5 2.5 0 0 1 348.4 544V560.4Z" fill="#e6e8f3"/>
<path d="M349 560.4V544A2.5 2.5 0 0 1 354 544V560.4Z" fill="#e6e8f3"/>
<path d="M354.6 560.4V544A2.5 2.5 0 0 1 359.7 544V560.4Z" fill="#e6e8f3"/>
<rect x="342.2" y="569.5" width="18.6" height="16.8" fill="#f8f5f8"/>
<path d="M343.3 584.9V569A2.5 2.5 0 0 1 348.4 569V584.9Z" fill="#e6e8f3"/>
<path d="M349 584.9V569A2.5 2.5 0 0 1 354 569V584.9Z" fill="#e6e8f3"/>
<path d="M354.6 584.9V569A2.5 2.5 0 0 1 359.7 569V584.9Z" fill="#e6e8f3"/>
<rect x="389.8" y="544.5" width="21.2" height="17.3" fill="#f8f5f8"/>
<path d="M390.9 560.4V544.5A3 3 0 0 1 396.8 544.5V560.4Z" fill="#e6e8f3"/>
<path d="M397.4 560.4V544.5A3 3 0 0 1 403.4 544.5V560.4Z" fill="#e6e8f3"/>
<path d="M404 560.4V544.5A3 3 0 0 1 409.9 544.5V560.4Z" fill="#e6e8f3"/>
<rect x="389.8" y="569.5" width="21.2" height="16.8" fill="#f8f5f8"/>
<path d="M390.9 584.9V569.5A3 3 0 0 1 396.8 569.5V584.9Z" fill="#e6e8f3"/>
<path d="M397.4 584.9V569.5A3 3 0 0 1 403.4 569.5V584.9Z" fill="#e6e8f3"/>
<path d="M404 584.9V569.5A3 3 0 0 1 409.9 569.5V584.9Z" fill="#e6e8f3"/>
<rect x="439.8" y="544.5" width="18.6" height="17.3" fill="#f8f5f8"/>
<path d="M440.9 560.4V544A2.5 2.5 0 0 1 446 544V560.4Z" fill="#e6e8f3"/>
<path d="M446.6 560.4V544A2.5 2.5 0 0 1 451.6 544V560.4Z" fill="#e6e8f3"/>
<path d="M452.2 560.4V544A2.5 2.5 0 0 1 457.3 544V560.4Z" fill="#e6e8f3"/>
<rect x="439.8" y="569.5" width="18.6" height="16.8" fill="#f8f5f8"/>
<path d="M440.9 584.9V569A2.5 2.5 0 0 1 446 569V584.9Z" fill="#e6e8f3"/>
<path d="M446.6 584.9V569A2.5 2.5 0 0 1 451.6 569V584.9Z" fill="#e6e8f3"/>
<path d="M452.2 584.9V569A2.5 2.5 0 0 1 457.3 569V584.9Z" fill="#e6e8f3"/>
<rect x="331.4" y="543.5" width="7" height="15" fill="#f8f5f8"/>
<path d="M332 558V543.7A2.9 2.9 0 0 1 337.8 543.7V558Z" fill="#e6e8f3"/>
<rect x="331.4" y="567" width="7" height="15.3" fill="#f8f5f8"/>
<path d="M332 581.7V566.9A2.9 2.9 0 0 1 337.8 566.9V581.7Z" fill="#e6e8f3"/>
<rect x="363.4" y="543.5" width="7" height="15" fill="#f8f5f8"/>
<path d="M364 558V543.7A2.9 2.9 0 0 1 369.8 543.7V558Z" fill="#e6e8f3"/>
<rect x="363.4" y="567" width="7" height="15.3" fill="#f8f5f8"/>
<path d="M364 581.7V566.9A2.9 2.9 0 0 1 369.8 566.9V581.7Z" fill="#e6e8f3"/>
<rect x="376.1" y="543.5" width="7" height="15" fill="#f8f5f8"/>
<path d="M376.7 558V543.7A2.9 2.9 0 0 1 382.5 543.7V558Z" fill="#e6e8f3"/>
<rect x="376.1" y="567" width="7" height="15.3" fill="#f8f5f8"/>
<path d="M376.7 581.7V566.9A2.9 2.9 0 0 1 382.5 566.9V581.7Z" fill="#e6e8f3"/>
<rect x="416.9" y="543.5" width="7" height="15" fill="#f8f5f8"/>
<path d="M417.5 558V543.7A2.9 2.9 0 0 1 423.3 543.7V558Z" fill="#e6e8f3"/>
<rect x="416.9" y="567" width="7" height="15.3" fill="#f8f5f8"/>
<path d="M417.5 581.7V566.9A2.9 2.9 0 0 1 423.3 566.9V581.7Z" fill="#e6e8f3"/>
<rect x="431.1" y="543.5" width="7" height="15" fill="#f8f5f8"/>
<path d="M431.7 558V543.7A2.9 2.9 0 0 1 437.5 543.7V558Z" fill="#e6e8f3"/>
<rect x="431.1" y="567" width="7" height="15.3" fill="#f8f5f8"/>
<path d="M431.7 581.7V566.9A2.9 2.9 0 0 1 437.5 566.9V581.7Z" fill="#e6e8f3"/>
<rect x="461.9" y="543.5" width="7" height="15" fill="#f8f5f8"/>
<path d="M462.5 558V543.7A2.9 2.9 0 0 1 468.3 543.7V558Z" fill="#e6e8f3"/>
<rect x="461.9" y="567" width="7" height="15.3" fill="#f8f5f8"/>
<path d="M462.5 581.7V566.9A2.9 2.9 0 0 1 468.3 566.9V581.7Z" fill="#e6e8f3"/>
<polygon points="326.5,586.7 475,586.7 478.3,594 321.5,594" fill="#c98d97"/>
<rect x="325.8" y="586.7" width="149.9" height="1" fill="#dba9b0"/>
<rect x="323.8" y="594" width="151.9" height="2.2" fill="#8a2738"/>
<rect x="329.8" y="596.2" width="141.9" height="16.6" fill="url(#gs)"/>
<path d="M336.4 597V610.5M341.4 597V610.5M369.4 597V610.5M375.9 597V610.5M382.4 597V610.5M388.9 597V610.5M420.4 597V610.5M426.9 597V610.5M433.4 597V610.5M438.4 597V610.5M461.4 597V610.5M466.4 597V610.5" fill="none" stroke="#6b2133" stroke-width="2"/>
<rect x="345" y="594" width="14.8" height="22.8" fill="#fbeef0"/>
<rect x="345.9" y="594" width="13" height="21.8" fill="#6b2133"/>
<rect x="390" y="594" width="20.3" height="22.8" fill="#fbeef0"/>
<rect x="390.9" y="594" width="18.5" height="21.8" fill="#6b2133"/>
<rect x="441.8" y="594" width="14" height="22.8" fill="#fbeef0"/>
<rect x="442.7" y="594" width="12.2" height="21.8" fill="#6b2133"/>
<path d="M1003.1 504.5C1003.1 497 1007.3 491 1016.3 487.6C1022.3 485.9 1029.3 485.6 1036.3 485.6C1043.3 485.6 1050.3 485.9 1056.3 487.6C1065.3 491 1069.5 497 1069.5 504.5Z" fill="#363850"/>
<path d="M1028.7 488.6Q1023.7 496 1022.7 504M1043.9 488.6Q1048.9 496 1049.9 504" fill="none" stroke="#96506a" stroke-width="1.5"/>
<path d="M1016.8 489.4Q1026.3 485.2 1031.8 484.4Q1034.7 483.8 1035.5 482L1036.3 473.6L1037.1 482Q1037.9 483.8 1040.8 484.4Q1046.3 485.2 1055.8 489.4Q1036.3 487.2 1016.8 489.4Z" fill="#a5455d"/>
<rect x="1013.9" y="494.5" width="3.4" height="4.6" fill="#e6e8f3"/>
<circle cx="1036.3" cy="497.5" r="2.2" fill="#e6e8f3"/>
<rect x="1055.3" y="494.5" width="3.4" height="4.6" fill="#e6e8f3"/>
<rect x="1002.5" y="503.4" width="67.6" height="2.8" fill="#2b2135"/>
<rect x="1002.5" y="506.2" width="67.6" height="2.4" fill="#8e3a52"/>
<rect x="1002.5" y="508.4" width="67.6" height="9" fill="#ab3a4e"/>
<rect x="1006.8" y="509" width="10" height="7" fill="#e6e8f3"/>
<rect x="1009.7" y="509" width="0.8" height="7" fill="#a8405a"/>
<rect x="1013.1" y="509" width="0.8" height="7" fill="#a8405a"/>
<rect x="1030" y="509" width="12.6" height="7" fill="#e6e8f3"/>
<rect x="1032.8" y="509" width="0.8" height="7" fill="#a8405a"/>
<rect x="1035.9" y="509" width="0.8" height="7" fill="#a8405a"/>
<rect x="1039" y="509" width="0.8" height="7" fill="#a8405a"/>
<rect x="1055" y="509" width="10" height="7" fill="#e6e8f3"/>
<rect x="1057.9" y="509" width="0.8" height="7" fill="#a8405a"/>
<rect x="1061.3" y="509" width="0.8" height="7" fill="#a8405a"/>
<rect x="1001.1" y="516.9" width="70.6" height="2.4" fill="#dc98a6"/>
<rect x="965.7" y="531.5" width="141.9" height="57.5" fill="#b5303a"/>
<rect x="965.7" y="531.3" width="141.9" height="4" fill="#a63c50"/>
<rect x="1000.8" y="520.8" width="5" height="5" fill="#e6e8f3"/>
<rect x="1066.8" y="520.8" width="5" height="5" fill="#e6e8f3"/>
<path d="M1024.8 545V531A11.5 11.5 0 0 1 1047.8 531V545Z" fill="#b82f3a"/>
<path d="M1026 545V531A10.3 10.3 0 0 1 1046.6 531V545" fill="none" stroke="#fbe4e6" stroke-width="1.7" stroke-dasharray="2 1.1"/>
<circle cx="1036.3" cy="530.3" r="3.2" fill="#f8f5f8"/>
<circle cx="1036.3" cy="530.3" r="1.1" fill="#c43e48"/>
<rect x="1006.5" y="532" width="5" height="37" fill="#f8f5f8"/>
<rect x="1060.9" y="532" width="5" height="37" fill="#f8f5f8"/>
<rect x="1008.3" y="569" width="1.4" height="17" fill="#f0bcc0"/>
<rect x="1062.7" y="569" width="1.4" height="17" fill="#f0bcc0"/>
<path d="M977.8 534V586M1022.8 534V586M1049.8 534V586M1094.8 534V586" fill="none" stroke="#f6d3d6" stroke-width="1.1" stroke-dasharray="1 2.2"/>
<rect x="978.1" y="544.5" width="18.6" height="17.3" fill="#f8f5f8"/>
<path d="M979.2 560.4V544A2.5 2.5 0 0 1 984.3 544V560.4Z" fill="#e6e8f3"/>
<path d="M984.9 560.4V544A2.5 2.5 0 0 1 989.9 544V560.4Z" fill="#e6e8f3"/>
<path d="M990.5 560.4V544A2.5 2.5 0 0 1 995.6 544V560.4Z" fill="#e6e8f3"/>
<rect x="978.1" y="569.5" width="18.6" height="16.8" fill="#f8f5f8"/>
<path d="M979.2 584.9V569A2.5 2.5 0 0 1 984.3 569V584.9Z" fill="#e6e8f3"/>
<path d="M984.9 584.9V569A2.5 2.5 0 0 1 989.9 569V584.9Z" fill="#e6e8f3"/>
<path d="M990.5 584.9V569A2.5 2.5 0 0 1 995.6 569V584.9Z" fill="#e6e8f3"/>
<rect x="1025.7" y="544.5" width="21.2" height="17.3" fill="#f8f5f8"/>
<path d="M1026.8 560.4V544.5A3 3 0 0 1 1032.7 544.5V560.4Z" fill="#e6e8f3"/>
<path d="M1033.3 560.4V544.5A3 3 0 0 1 1039.3 544.5V560.4Z" fill="#e6e8f3"/>
<path d="M1039.9 560.4V544.5A3 3 0 0 1 1045.8 544.5V560.4Z" fill="#e6e8f3"/>
<rect x="1025.7" y="569.5" width="21.2" height="16.8" fill="#f8f5f8"/>
<path d="M1026.8 584.9V569.5A3 3 0 0 1 1032.7 569.5V584.9Z" fill="#e6e8f3"/>
<path d="M1033.3 584.9V569.5A3 3 0 0 1 1039.3 569.5V584.9Z" fill="#e6e8f3"/>
<path d="M1039.9 584.9V569.5A3 3 0 0 1 1045.8 569.5V584.9Z" fill="#e6e8f3"/>
<rect x="1075.7" y="544.5" width="18.6" height="17.3" fill="#f8f5f8"/>
<path d="M1076.8 560.4V544A2.5 2.5 0 0 1 1081.9 544V560.4Z" fill="#e6e8f3"/>
<path d="M1082.5 560.4V544A2.5 2.5 0 0 1 1087.5 544V560.4Z" fill="#e6e8f3"/>
<path d="M1088.1 560.4V544A2.5 2.5 0 0 1 1093.2 544V560.4Z" fill="#e6e8f3"/>
<rect x="1075.7" y="569.5" width="18.6" height="16.8" fill="#f8f5f8"/>
<path d="M1076.8 584.9V569A2.5 2.5 0 0 1 1081.9 569V584.9Z" fill="#e6e8f3"/>
<path d="M1082.5 584.9V569A2.5 2.5 0 0 1 1087.5 569V584.9Z" fill="#e6e8f3"/>
<path d="M1088.1 584.9V569A2.5 2.5 0 0 1 1093.2 569V584.9Z" fill="#e6e8f3"/>
<rect x="967.3" y="543.5" width="7" height="15" fill="#f8f5f8"/>
<path d="M967.9 558V543.7A2.9 2.9 0 0 1 973.7 543.7V558Z" fill="#e6e8f3"/>
<rect x="967.3" y="567" width="7" height="15.3" fill="#f8f5f8"/>
<path d="M967.9 581.7V566.9A2.9 2.9 0 0 1 973.7 566.9V581.7Z" fill="#e6e8f3"/>
<rect x="999.3" y="543.5" width="7" height="15" fill="#f8f5f8"/>
<path d="M999.9 558V543.7A2.9 2.9 0 0 1 1005.7 543.7V558Z" fill="#e6e8f3"/>
<rect x="999.3" y="567" width="7" height="15.3" fill="#f8f5f8"/>
<path d="M999.9 581.7V566.9A2.9 2.9 0 0 1 1005.7 566.9V581.7Z" fill="#e6e8f3"/>
<rect x="1012" y="543.5" width="7" height="15" fill="#f8f5f8"/>
<path d="M1012.6 558V543.7A2.9 2.9 0 0 1 1018.4 543.7V558Z" fill="#e6e8f3"/>
<rect x="1012" y="567" width="7" height="15.3" fill="#f8f5f8"/>
<path d="M1012.6 581.7V566.9A2.9 2.9 0 0 1 1018.4 566.9V581.7Z" fill="#e6e8f3"/>
<rect x="1052.8" y="543.5" width="7" height="15" fill="#f8f5f8"/>
<path d="M1053.4 558V543.7A2.9 2.9 0 0 1 1059.2 543.7V558Z" fill="#e6e8f3"/>
<rect x="1052.8" y="567" width="7" height="15.3" fill="#f8f5f8"/>
<path d="M1053.4 581.7V566.9A2.9 2.9 0 0 1 1059.2 566.9V581.7Z" fill="#e6e8f3"/>
<rect x="1067" y="543.5" width="7" height="15" fill="#f8f5f8"/>
<path d="M1067.6 558V543.7A2.9 2.9 0 0 1 1073.4 543.7V558Z" fill="#e6e8f3"/>
<rect x="1067" y="567" width="7" height="15.3" fill="#f8f5f8"/>
<path d="M1067.6 581.7V566.9A2.9 2.9 0 0 1 1073.4 566.9V581.7Z" fill="#e6e8f3"/>
<rect x="1097.8" y="543.5" width="7" height="15" fill="#f8f5f8"/>
<path d="M1098.4 558V543.7A2.9 2.9 0 0 1 1104.2 543.7V558Z" fill="#e6e8f3"/>
<rect x="1097.8" y="567" width="7" height="15.3" fill="#f8f5f8"/>
<path d="M1098.4 581.7V566.9A2.9 2.9 0 0 1 1104.2 566.9V581.7Z" fill="#e6e8f3"/>
<polygon points="962.4,586.7 1110.9,586.7 1114.2,594 957.4,594" fill="#c98d97"/>
<rect x="961.7" y="586.7" width="149.9" height="1" fill="#dba9b0"/>
<rect x="959.7" y="594" width="151.9" height="2.2" fill="#8a2738"/>
<rect x="965.7" y="596.2" width="141.9" height="16.6" fill="url(#gs)"/>
<path d="M972.3 597V610.5M977.3 597V610.5M1005.3 597V610.5M1011.8 597V610.5M1018.3 597V610.5M1024.8 597V610.5M1056.3 597V610.5M1062.8 597V610.5M1069.3 597V610.5M1074.3 597V610.5M1097.3 597V610.5M1102.3 597V610.5" fill="none" stroke="#6b2133" stroke-width="2"/>
<rect x="980.9" y="594" width="14.8" height="22.8" fill="#fbeef0"/>
<rect x="981.8" y="594" width="13" height="21.8" fill="#6b2133"/>
<rect x="1025.9" y="594" width="20.3" height="22.8" fill="#fbeef0"/>
<rect x="1026.8" y="594" width="18.5" height="21.8" fill="#6b2133"/>
<rect x="1077.7" y="594" width="14" height="22.8" fill="#fbeef0"/>
<rect x="1078.6" y="594" width="12.2" height="21.8" fill="#6b2133"/>
<path d="M267.1 531C267.1 524.2 271.9 520.6 279.9 520.6C287.9 520.6 292.7 524.2 292.7 531Z" fill="#363850"/>
<path d="M276.4 521.5Q273.7 525 273.3 531M283.4 521.5Q286.1 525 286.5 531" fill="none" stroke="#8a4460" stroke-width="0.9"/>
<path d="M274.6 521.2C274.6 513.2 285.2 513.2 285.2 521.2Q279.9 520 274.6 521.2Z" fill="#a8324a"/>
<rect x="279.4" y="505" width="0.9" height="9.5" fill="#a8506a"/>
<rect x="265.8" y="530.8" width="28.2" height="9.7" fill="#fbf3ee"/>
<rect x="269" y="533" width="4.6" height="5.6" fill="none" stroke="#7a4a3a" stroke-width="0.9"/>
<rect x="270.3" y="534.4" width="2" height="3" fill="#b58a7a"/>
<rect x="277.6" y="533" width="4.6" height="5.6" fill="none" stroke="#7a4a3a" stroke-width="0.9"/>
<rect x="278.9" y="534.4" width="2" height="3" fill="#b58a7a"/>
<rect x="286.2" y="533" width="4.6" height="5.6" fill="none" stroke="#7a4a3a" stroke-width="0.9"/>
<rect x="287.5" y="534.4" width="2" height="3" fill="#b58a7a"/>
<path d="M275.6 532.6V539M284.2 532.6V539" fill="none" stroke="#5b3a30" stroke-width="1"/>
<rect x="265.8" y="540.5" width="28.2" height="49" fill="#b5303a"/>
<rect x="282.3" y="540.5" width="11.7" height="49" fill="#a02933"/>
<rect x="265.8" y="541.5" width="28.2" height="1.2" fill="#e9a4aa"/>
<path d="M276.7 558V547.3A3.3 3.3 0 0 1 283.3 547.3V558Z" fill="#e6e8f3"/>
<path d="M276.7 581.5V566.3A3.3 3.3 0 0 1 283.3 566.3V581.5Z" fill="#e6e8f3"/>
<rect x="275.7" y="557" width="8.6" height="1.6" fill="#f8f5f8"/>
<rect x="275.7" y="580.5" width="8.6" height="1.6" fill="#f8f5f8"/>
<rect x="265.8" y="585.5" width="28.2" height="1.3" fill="#e9a4aa"/>
<rect x="265.8" y="588.5" width="28.2" height="24.3" fill="url(#gs)"/>
<rect x="276.1" y="590.4" width="7.8" height="21.6" fill="#f3c9cc"/>
<rect x="276.7" y="591" width="6.6" height="20.5" fill="#6b2133"/>
<path d="M1143.9 531C1143.9 524.2 1148.7 520.6 1156.7 520.6C1164.7 520.6 1169.5 524.2 1169.5 531Z" fill="#363850"/>
<path d="M1153.2 521.5Q1150.5 525 1150.1 531M1160.2 521.5Q1162.9 525 1163.2 531" fill="none" stroke="#8a4460" stroke-width="0.9"/>
<path d="M1151.4 521.2C1151.4 513.2 1162 513.2 1162 521.2Q1156.7 520 1151.4 521.2Z" fill="#a8324a"/>
<rect x="1156.2" y="505" width="0.9" height="9.5" fill="#a8506a"/>
<rect x="1142.5" y="530.8" width="28.3" height="9.7" fill="#fbf3ee"/>
<rect x="1145.7" y="533" width="4.6" height="5.6" fill="none" stroke="#7a4a3a" stroke-width="0.9"/>
<rect x="1147" y="534.4" width="2" height="3" fill="#b58a7a"/>
<rect x="1154.3" y="533" width="4.6" height="5.6" fill="none" stroke="#7a4a3a" stroke-width="0.9"/>
<rect x="1155.6" y="534.4" width="2" height="3" fill="#b58a7a"/>
<rect x="1162.9" y="533" width="4.6" height="5.6" fill="none" stroke="#7a4a3a" stroke-width="0.9"/>
<rect x="1164.2" y="534.4" width="2" height="3" fill="#b58a7a"/>
<path d="M1152.3 532.6V539M1160.9 532.6V539" fill="none" stroke="#5b3a30" stroke-width="1"/>
<rect x="1142.5" y="540.5" width="28.3" height="49" fill="#b5303a"/>
<rect x="1142.5" y="540.5" width="11.8" height="49" fill="#a02933"/>
<rect x="1142.5" y="541.5" width="28.3" height="1.2" fill="#e9a4aa"/>
<path d="M1153.3 558V547.3A3.3 3.3 0 0 1 1159.9 547.3V558Z" fill="#e6e8f3"/>
<path d="M1153.3 581.5V566.3A3.3 3.3 0 0 1 1159.9 566.3V581.5Z" fill="#e6e8f3"/>
<rect x="1152.3" y="557" width="8.6" height="1.6" fill="#f8f5f8"/>
<rect x="1152.3" y="580.5" width="8.6" height="1.6" fill="#f8f5f8"/>
<rect x="1142.5" y="585.5" width="28.3" height="1.3" fill="#e9a4aa"/>
<rect x="1142.5" y="588.5" width="28.3" height="24.3" fill="url(#gs)"/>
<rect x="1152.7" y="590.4" width="7.8" height="21.6" fill="#f3c9cc"/>
<rect x="1153.3" y="591" width="6.6" height="20.5" fill="#6b2133"/>
<rect x="265.8" y="612" width="905" height="2" fill="#d9c7c8" opacity="0.55"/>
<rect x="679" y="617.4" width="92.5" height="9.6" fill="#f1f1ef"/>
<polygon points="666,632 693,632 685.7,669.4 654.8,669.4" fill="#c9c9c7"/>
<polygon points="757,632 785,632 795.2,669.4 764.4,669.4" fill="#c9c9c7"/>
<polygon points="648.3,675.2 684.7,675.2 669.5,746.7 624.6,746.7" fill="#92d050"/>
<polygon points="765.7,675.2 801.7,675.2 825.2,746.7 780.6,746.7" fill="#92d050"/>
<polygon points="694.5,626.8 756.2,626.8 784,771.5 665.9,771.5" fill="#fdfdfd"/>
<path d="M691.9 617Q692.4 608 698.4 604Q704.4 608 704.9 617Z" fill="#2fb457"/>
<path d="M695.2 615Q695.4 610 698.9 607Q701.9 610 702.2 615Z" fill="#7fd46e"/>
<path d="M750.1 617Q750.6 608 756.6 604Q762.6 608 763.1 617Z" fill="#2fb457"/>
<path d="M753.4 615Q753.6 610 757.1 607Q760.1 610 760.4 615Z" fill="#7fd46e"/>
<path d="M555 616.5V626M566.7 616.5V626M578.4 616.5V626M590.1 616.5V626M601.8 616.5V626M613.5 616.5V626M625.2 616.5V626M636.9 616.5V626M648.6 616.5V626M660.3 616.5V626" fill="none" stroke="#cdcdcb" stroke-width="1"/>
<polygon points="625,645 637.6,645 636.6,653 622,653" fill="#fbfbfa"/>
<rect x="626.8" y="632.4" width="2.4" height="13.6" fill="#9a4a22"/>
<rect x="622" y="645.7" width="12" height="4.6" fill="#c85a1f"/>
<circle cx="626.5" cy="607.9" r="4.6" fill="#1fa64e"/>
<circle cx="624.5" cy="613.9" r="5.5" fill="#8fd36b"/>
<circle cx="620" cy="619.4" r="4.6" fill="#1fa64e"/>
<circle cx="631.5" cy="618.4" r="5.3" fill="#1fa64e"/>
<circle cx="625.5" cy="622.9" r="4.6" fill="#8fd36b"/>
<circle cx="620.2" cy="627.4" r="5" fill="#8fd36b"/>
<circle cx="631.2" cy="625.9" r="4.6" fill="#55c25c"/>
<circle cx="621" cy="632.4" r="4.1" fill="#1fa64e"/>
<circle cx="627.8" cy="631.9" r="5.4" fill="#1fa64e"/>
<circle cx="627.8" cy="631.9" r="5.4" fill="none" stroke="#178a40" stroke-width="0.7"/>
<polygon points="609.7,670 624,670 623,678 606.7,678" fill="#fbfbfa"/>
<rect x="611.4" y="657.7" width="2.4" height="13.5" fill="#9a4a22"/>
<rect x="606.6" y="670.9" width="12" height="4.6" fill="#c85a1f"/>
<circle cx="613.5" cy="633.2" r="4.6" fill="#1fa64e"/>
<circle cx="611.5" cy="639.2" r="5.5" fill="#8fd36b"/>
<circle cx="607" cy="644.7" r="4.6" fill="#1fa64e"/>
<circle cx="618.5" cy="643.7" r="5.3" fill="#1fa64e"/>
<circle cx="612.5" cy="648.2" r="4.6" fill="#8fd36b"/>
<circle cx="607.2" cy="652.7" r="5" fill="#8fd36b"/>
<circle cx="618.2" cy="651.2" r="4.6" fill="#55c25c"/>
<circle cx="608" cy="657.7" r="4.1" fill="#1fa64e"/>
<circle cx="614.8" cy="657.2" r="5.4" fill="#1fa64e"/>
<circle cx="614.8" cy="657.2" r="5.4" fill="none" stroke="#178a40" stroke-width="0.7"/>
<polygon points="595,692 611,692 610,703 592,703" fill="#fbfbfa"/>
<rect x="598.1" y="679.8" width="2.4" height="13.5" fill="#9a4a22"/>
<rect x="593.3" y="693" width="12" height="4.6" fill="#c85a1f"/>
<circle cx="599.3" cy="655.3" r="4.6" fill="#1fa64e"/>
<circle cx="597.3" cy="661.3" r="5.5" fill="#8fd36b"/>
<circle cx="592.8" cy="666.8" r="4.6" fill="#1fa64e"/>
<circle cx="604.3" cy="665.8" r="5.3" fill="#1fa64e"/>
<circle cx="598.3" cy="670.3" r="4.6" fill="#8fd36b"/>
<circle cx="593" cy="674.8" r="5" fill="#8fd36b"/>
<circle cx="604" cy="673.3" r="4.6" fill="#55c25c"/>
<circle cx="593.8" cy="679.8" r="4.1" fill="#1fa64e"/>
<circle cx="600.6" cy="679.3" r="5.4" fill="#1fa64e"/>
<circle cx="600.6" cy="679.3" r="5.4" fill="none" stroke="#178a40" stroke-width="0.7"/>
<polygon points="577.2,720.4 597.6,720.4 596.6,732.7 574.2,732.7" fill="#fbfbfa"/>
<rect x="583.4" y="708" width="2.4" height="16" fill="#9a4a22"/>
<rect x="578.6" y="723.7" width="12" height="4.6" fill="#c85a1f"/>
<circle cx="586.1" cy="683.5" r="4.6" fill="#1fa64e"/>
<circle cx="584.1" cy="689.5" r="5.5" fill="#8fd36b"/>
<circle cx="579.6" cy="695" r="4.6" fill="#1fa64e"/>
<circle cx="591.1" cy="694" r="5.3" fill="#1fa64e"/>
<circle cx="585.1" cy="698.5" r="4.6" fill="#8fd36b"/>
<circle cx="579.8" cy="703" r="5" fill="#8fd36b"/>
<circle cx="590.8" cy="701.5" r="4.6" fill="#55c25c"/>
<circle cx="580.6" cy="708" r="4.1" fill="#1fa64e"/>
<circle cx="587.4" cy="707.5" r="5.4" fill="#1fa64e"/>
<circle cx="587.4" cy="707.5" r="5.4" fill="none" stroke="#178a40" stroke-width="0.7"/>
<polygon points="807.6,645 818.2,645 821.2,653 808.6,653" fill="#fbfbfa"/>
<rect x="813.4" y="632.4" width="2.4" height="13.6" fill="#9a4a22"/>
<rect x="808.6" y="645.7" width="12" height="4.6" fill="#c85a1f"/>
<circle cx="816.9" cy="607.9" r="4.6" fill="#1fa64e"/>
<circle cx="814.9" cy="613.9" r="5.5" fill="#8fd36b"/>
<circle cx="810.4" cy="619.4" r="4.6" fill="#1fa64e"/>
<circle cx="821.9" cy="618.4" r="5.3" fill="#1fa64e"/>
<circle cx="815.9" cy="622.9" r="4.6" fill="#8fd36b"/>
<circle cx="810.6" cy="627.4" r="5" fill="#8fd36b"/>
<circle cx="821.6" cy="625.9" r="4.6" fill="#55c25c"/>
<circle cx="811.4" cy="632.4" r="4.1" fill="#1fa64e"/>
<circle cx="818.2" cy="631.9" r="5.4" fill="#1fa64e"/>
<circle cx="818.2" cy="631.9" r="5.4" fill="none" stroke="#178a40" stroke-width="0.7"/>
<polygon points="821,670 834.5,670 837.5,678 822,678" fill="#fbfbfa"/>
<rect x="829.3" y="657.7" width="2.4" height="13.5" fill="#9a4a22"/>
<rect x="824.5" y="670.9" width="12" height="4.6" fill="#c85a1f"/>
<circle cx="830.8" cy="633.2" r="4.6" fill="#1fa64e"/>
<circle cx="828.8" cy="639.2" r="5.5" fill="#8fd36b"/>
<circle cx="824.3" cy="644.7" r="4.6" fill="#1fa64e"/>
<circle cx="835.8" cy="643.7" r="5.3" fill="#1fa64e"/>
<circle cx="829.8" cy="648.2" r="4.6" fill="#8fd36b"/>
<circle cx="824.5" cy="652.7" r="5" fill="#8fd36b"/>
<circle cx="835.5" cy="651.2" r="4.6" fill="#55c25c"/>
<circle cx="825.3" cy="657.7" r="4.1" fill="#1fa64e"/>
<circle cx="832.1" cy="657.2" r="5.4" fill="#1fa64e"/>
<circle cx="832.1" cy="657.2" r="5.4" fill="none" stroke="#178a40" stroke-width="0.7"/>
<polygon points="837.5,692 854,692 857,703 838.5,703" fill="#fbfbfa"/>
<rect x="845.7" y="679.8" width="2.4" height="13.5" fill="#9a4a22"/>
<rect x="840.9" y="693" width="12" height="4.6" fill="#c85a1f"/>
<circle cx="847.7" cy="655.3" r="4.6" fill="#1fa64e"/>
<circle cx="845.7" cy="661.3" r="5.5" fill="#8fd36b"/>
<circle cx="841.2" cy="666.8" r="4.6" fill="#1fa64e"/>
<circle cx="852.7" cy="665.8" r="5.3" fill="#1fa64e"/>
<circle cx="846.7" cy="670.3" r="4.6" fill="#8fd36b"/>
<circle cx="841.4" cy="674.8" r="5" fill="#8fd36b"/>
<circle cx="852.4" cy="673.3" r="4.6" fill="#55c25c"/>
<circle cx="842.2" cy="679.8" r="4.1" fill="#1fa64e"/>
<circle cx="849" cy="679.3" r="5.4" fill="#1fa64e"/>
<circle cx="849" cy="679.3" r="5.4" fill="none" stroke="#178a40" stroke-width="0.7"/>
<polygon points="852,720.4 873.5,720.4 876.5,732.7 853,732.7" fill="#fbfbfa"/>
<rect x="861.1" y="708" width="2.4" height="16" fill="#9a4a22"/>
<rect x="856.3" y="723.7" width="12" height="4.6" fill="#c85a1f"/>
<circle cx="862.4" cy="683.5" r="4.6" fill="#1fa64e"/>
<circle cx="860.4" cy="689.5" r="5.5" fill="#8fd36b"/>
<circle cx="855.9" cy="695" r="4.6" fill="#1fa64e"/>
<circle cx="867.4" cy="694" r="5.3" fill="#1fa64e"/>
<circle cx="861.4" cy="698.5" r="4.6" fill="#8fd36b"/>
<circle cx="856.1" cy="703" r="5" fill="#8fd36b"/>
<circle cx="867.1" cy="701.5" r="4.6" fill="#55c25c"/>
<circle cx="856.9" cy="708" r="4.1" fill="#1fa64e"/>
<circle cx="863.7" cy="707.5" r="5.4" fill="#1fa64e"/>
<circle cx="863.7" cy="707.5" r="5.4" fill="none" stroke="#178a40" stroke-width="0.7"/>
<ellipse cx="647.5" cy="374.3" rx="8.6" ry="22.2" fill="#a83240"/>
<ellipse cx="647.5" cy="346.3" rx="7.2" ry="7.8" fill="#ffe699"/>
<ellipse cx="647.3" cy="334.3" rx="11.4" ry="7.4" fill="#dd6f1c"/>
<path d="M639 338Q647.3 343.5 655.6 338L655.6 335H639Z" fill="#dd6f1c"/>
<ellipse cx="723.5" cy="334.1" rx="14.3" ry="13.6" fill="#c4622a"/>
<ellipse cx="723.5" cy="365.6" rx="9.1" ry="21.3" fill="#a72c3a"/>
<ellipse cx="723.5" cy="335.1" rx="12.2" ry="9.3" fill="#fff1cf"/>
<path d="M710.1 328.6C710 319.6 717.5 317.3 723.5 317.3C729.5 317.3 737 319.6 736.9 328.6Q723.5 324.1 710.1 328.6Z" fill="#d2691e"/>
<ellipse cx="801.3" cy="385.2" rx="19.6" ry="32.2" fill="#0b2a6f"/>
<ellipse cx="801.3" cy="358.2" rx="11" ry="7.2" fill="#ffffff"/>
<circle cx="801.3" cy="339.8" r="17.8" fill="#ffe699"/>
<path d="M798.9 361C796.9 369 796.7 383 801.3 385.5C805.9 383 805.7 369 803.7 361Z" fill="#f80d0d"/>
<ellipse cx="801.3" cy="359.2" rx="4.7" ry="4.5" fill="#ff1010"/>
<ellipse cx="801.3" cy="325" rx="17.8" ry="8.2" fill="#30343a"/>
<ellipse cx="865.4" cy="411.8" rx="19.6" ry="31.8" fill="#050505"/>
<ellipse cx="865.4" cy="385.2" rx="11" ry="7.2" fill="#ffffff"/>
<circle cx="865.4" cy="366.2" r="17.8" fill="#ffe699"/>
<path d="M863 388C861 396 860.8 410 865.4 412.5C870 410 869.8 396 867.8 388Z" fill="#f80d0d"/>
<ellipse cx="865.4" cy="386.2" rx="4.7" ry="4.5" fill="#ff1010"/>
<ellipse cx="865.4" cy="351.4" rx="17.8" ry="8.2" fill="#30343a"/>
<ellipse cx="928.8" cy="425.7" rx="19.6" ry="32.1" fill="#050505"/>
<ellipse cx="928.8" cy="398.8" rx="11" ry="7.2" fill="#ffffff"/>
<circle cx="928.8" cy="381.7" r="17.8" fill="#ffe699"/>
<path d="M926.4 401.6C924.4 409.6 924.2 423.6 928.8 426.1C933.4 423.6 933.2 409.6 931.2 401.6Z" fill="#f80d0d"/>
<ellipse cx="928.8" cy="399.8" rx="4.7" ry="4.5" fill="#ff1010"/>
<path d="M909.3 378.2C906.8 364.7 920.8 356.7 930.8 357.2C942.8 357.7 951.8 365.7 950.3 377.7C942.8 380.2 932.8 377.7 926.8 372.7C922.8 377.7 915.8 379.7 909.3 378.2Z" fill="#d2691e"/>
</g></defs>
<rect x="227.5" y="255.5" width="994" height="567" fill="none" stroke="#dededa" stroke-width="1"/>
<use href="#slideart"/>
<path d="M264.6 259.8V822M341.4 259.8V822M418.2 259.8V822M495 259.8V822M571.7 259.8V822M648.5 259.8V822M725.3 259.8V822M802.1 259.8V822M878.9 259.8V822M955.6 259.8V822M1032.4 259.8V822M1109.2 259.8V822M1186 259.8V822M228.4 307.6H1221M228.4 384.4H1221M228.4 461.2H1221M228.4 538H1221M228.4 614.8H1221M228.4 691.6H1221M228.4 768.4H1221" fill="none" stroke="#ffffff" stroke-width="1" stroke-dasharray="1.1 4.806" opacity="0.58" style="mix-blend-mode:difference"/>
<circle cx="632.5" cy="327.5" r="4.1" fill="#ffffff" stroke="#8a8a8a" stroke-width="1.1"/>
<circle cx="661.3" cy="327.5" r="4.1" fill="#ffffff" stroke="#8a8a8a" stroke-width="1.1"/>
<circle cx="632" cy="341" r="4.1" fill="#ffffff" stroke="#8a8a8a" stroke-width="1.1"/>
<circle cx="661.3" cy="341" r="4.1" fill="#ffffff" stroke="#8a8a8a" stroke-width="1.1"/>
<circle cx="639.5" cy="344.5" r="4.1" fill="#ffffff" stroke="#8a8a8a" stroke-width="1.1"/>
<circle cx="656.3" cy="344.5" r="4.1" fill="#ffffff" stroke="#8a8a8a" stroke-width="1.1"/>
<circle cx="633.3" cy="353.8" r="4.1" fill="#ffffff" stroke="#8a8a8a" stroke-width="1.1"/>
<circle cx="660.8" cy="353.8" r="4.1" fill="#ffffff" stroke="#8a8a8a" stroke-width="1.1"/>
<circle cx="631.3" cy="362.5" r="4.1" fill="#ffffff" stroke="#8a8a8a" stroke-width="1.1"/>
<circle cx="647.5" cy="362.5" r="4.1" fill="#ffffff" stroke="#8a8a8a" stroke-width="1.1"/>
<circle cx="663.8" cy="362.5" r="4.1" fill="#ffffff" stroke="#8a8a8a" stroke-width="1.1"/>
<circle cx="638" cy="371.3" r="4.1" fill="#ffffff" stroke="#8a8a8a" stroke-width="1.1"/>
<circle cx="657" cy="371.3" r="4.1" fill="#ffffff" stroke="#8a8a8a" stroke-width="1.1"/>
<circle cx="638" cy="396.3" r="4.1" fill="#ffffff" stroke="#8a8a8a" stroke-width="1.1"/>
<circle cx="657" cy="396.3" r="4.1" fill="#ffffff" stroke="#8a8a8a" stroke-width="1.1"/>
<circle cx="647.5" cy="327.5" r="4.1" fill="#ffffff" stroke="#8a8a8a" stroke-width="1.1"/>
<path d="M647.5 324V331M644 327.5H651" fill="none" stroke="#8a8a8a" stroke-width="0.8"/>
<path d="M650.7 297.3A6.7 6.7 0 1 1 654.1 290.2" fill="none" stroke="#8f8f8f" stroke-width="4.6"/>
<path d="M649.4 289.8h9.6l-4.8 6.2z" fill="#ffffff" stroke="#8f8f8f" stroke-width="1"/>
<path d="M650.7 297.3A6.7 6.7 0 1 1 654.1 290.2" fill="none" stroke="#ffffff" stroke-width="2.7"/>
<path d="M650.5 290.2h7.4l-3.7 4.8z" fill="#ffffff"/>
<path d="M650.7 317.3A6.7 6.7 0 1 1 654.1 310.2" fill="none" stroke="#8f8f8f" stroke-width="4.6"/>
<path d="M649.4 309.8h9.6l-4.8 6.2z" fill="#ffffff" stroke="#8f8f8f" stroke-width="1"/>
<path d="M650.7 317.3A6.7 6.7 0 1 1 654.1 310.2" fill="none" stroke="#ffffff" stroke-width="2.7"/>
<path d="M650.5 310.2h7.4l-3.7 4.8z" fill="#ffffff"/>
<rect x="230" y="183" width="991" height="14.5" fill="#ffffff"/>
<text class="rn" x="275.2" y="194.3" text-anchor="middle">6</text>
<text class="rn" x="350.2" y="194.3" text-anchor="middle">5</text>
<text class="rn" x="425.2" y="194.3" text-anchor="middle">4</text>
<text class="rn" x="500.2" y="194.3" text-anchor="middle">3</text>
<text class="rn" x="575.2" y="194.3" text-anchor="middle">2</text>
<text class="rn" x="650.2" y="194.3" text-anchor="middle">1</text>
<text class="rn" x="725.2" y="194.3" text-anchor="middle">0</text>
<text class="rn" x="800.2" y="194.3" text-anchor="middle">1</text>
<text class="rn" x="875.2" y="194.3" text-anchor="middle">2</text>
<text class="rn" x="950.2" y="194.3" text-anchor="middle">3</text>
<text class="rn" x="1025.2" y="194.3" text-anchor="middle">4</text>
<text class="rn" x="1100.2" y="194.3" text-anchor="middle">5</text>
<text class="rn" x="1175.2" y="194.3" text-anchor="middle">6</text>
<path d="M237.7 187V193M312.7 187V193M387.7 187V193M462.7 187V193M537.7 187V193M612.7 187V193M687.7 187V193M762.7 187V193M837.7 187V193M912.7 187V193M987.7 187V193M1062.7 187V193M1137.7 187V193M1212.7 187V193" fill="none" stroke="#555" stroke-width="1"/>
<path d="M247.1 189.5V191M256.5 189.5V191M265.8 189.5V191M284.6 189.5V191M294 189.5V191M303.3 189.5V191M322.1 189.5V191M331.5 189.5V191M340.8 189.5V191M359.6 189.5V191M369 189.5V191M378.3 189.5V191M397.1 189.5V191M406.5 189.5V191M415.8 189.5V191M434.6 189.5V191M444 189.5V191M453.3 189.5V191M472.1 189.5V191M481.5 189.5V191M490.8 189.5V191M509.6 189.5V191M519 189.5V191M528.3 189.5V191M547.1 189.5V191M556.5 189.5V191M565.8 189.5V191M584.6 189.5V191M594 189.5V191M603.3 189.5V191M622.1 189.5V191M631.5 189.5V191M640.8 189.5V191M659.6 189.5V191M669 189.5V191M678.3 189.5V191M697.1 189.5V191M706.5 189.5V191M715.8 189.5V191M734.6 189.5V191M744 189.5V191M753.3 189.5V191M772.1 189.5V191M781.5 189.5V191M790.8 189.5V191M809.6 189.5V191M819 189.5V191M828.3 189.5V191M847.1 189.5V191M856.5 189.5V191M865.8 189.5V191M884.6 189.5V191M894 189.5V191M903.3 189.5V191M922.1 189.5V191M931.5 189.5V191M940.8 189.5V191M959.6 189.5V191M969 189.5V191M978.3 189.5V191M997.1 189.5V191M1006.5 189.5V191M1015.8 189.5V191M1034.6 189.5V191M1044 189.5V191M1053.3 189.5V191M1072.1 189.5V191M1081.5 189.5V191M1090.8 189.5V191M1109.6 189.5V191M1119 189.5V191M1128.3 189.5V191M1147.1 189.5V191M1156.5 189.5V191M1165.8 189.5V191M1184.6 189.5V191M1194 189.5V191M1203.3 189.5V191" fill="none" stroke="#9a9a9a" stroke-width="1"/>
<path d="M642.5 183V197" fill="none" stroke="#8a8a8a" stroke-width="1" stroke-dasharray="1 1"/>
<rect x="207" y="257" width="14.3" height="563.5" fill="#ffffff"/>
<text class="rn" x="0" y="0" text-anchor="middle" transform="translate(218 313) rotate(-90)">3</text>
<text class="rn" x="0" y="0" text-anchor="middle" transform="translate(218 388) rotate(-90)">2</text>
<text class="rn" x="0" y="0" text-anchor="middle" transform="translate(218 463) rotate(-90)">1</text>
<text class="rn" x="0" y="0" text-anchor="middle" transform="translate(218 538) rotate(-90)">0</text>
<text class="rn" x="0" y="0" text-anchor="middle" transform="translate(218 613) rotate(-90)">1</text>
<text class="rn" x="0" y="0" text-anchor="middle" transform="translate(218 688) rotate(-90)">2</text>
<text class="rn" x="0" y="0" text-anchor="middle" transform="translate(218 763) rotate(-90)">3</text>
<path d="M211 275.5H217M211 350.5H217M211 425.5H217M211 500.5H217M211 575.5H217M211 650.5H217M211 725.5H217M211 800.5H217" fill="none" stroke="#555" stroke-width="1"/>
<path d="M213.5 266.1H215M213.5 284.9H215M213.5 294.2H215M213.5 303.6H215M213.5 322.4H215M213.5 331.8H215M213.5 341.1H215M213.5 359.9H215M213.5 369.2H215M213.5 378.6H215M213.5 397.4H215M213.5 406.8H215M213.5 416.1H215M213.5 434.9H215M213.5 444.2H215M213.5 453.6H215M213.5 472.4H215M213.5 481.8H215M213.5 491.1H215M213.5 509.9H215M213.5 519.2H215M213.5 528.6H215M213.5 547.4H215M213.5 556.8H215M213.5 566.1H215M213.5 584.9H215M213.5 594.2H215M213.5 603.6H215M213.5 622.4H215M213.5 631.8H215M213.5 641.1H215M213.5 659.9H215M213.5 669.2H215M213.5 678.6H215M213.5 697.4H215M213.5 706.8H215M213.5 716.1H215M213.5 734.9H215M213.5 744.2H215M213.5 753.6H215M213.5 772.4H215M213.5 781.8H215M213.5 791.1H215M213.5 809.9H215" fill="none" stroke="#9a9a9a" stroke-width="1"/>
<path d="M206 369H221" fill="none" stroke="#8a8a8a" stroke-width="1" stroke-dasharray="1 1"/>
<rect x="35" y="197.8" width="141.6" height="81" fill="#f6e6e0" stroke="#dc7054" stroke-width="2"/>
<svg x="38" y="200" width="136.5" height="77" viewBox="228 256 993 566" preserveAspectRatio="none"><use href="#slideart"/></svg>
<rect x="144.7" y="205.7" width="15.3" height="28.5" fill="#5f5f5f" opacity="0.42"/>
<rect x="51.4" y="215.8" width="14.6" height="15.4" fill="#fbfbfb" stroke="#9a9a9a" stroke-width="0.8"/>
<path d="M58.4 215.8V231.2M51.4 224.5H66" fill="none" stroke="#a5a5a5" stroke-width="0.9"/>
<text x="13.5" y="210.5" style="font-family:'Liberation Sans',sans-serif;font-size:14px;fill:#d0694c">1</text>
<path d="M466.3 254.2V267.4L469.2 264.8L471.5 269.6L473.5 268.7L471.3 264L475.6 263.7Z" fill="#ffffff" stroke="#1a1a1a" stroke-width="1" stroke-linejoin="round"/>
</svg>
<!-- pane -->
<svg class="uisvg" viewBox="0 0 1600 900">
<text x="1251.4" y="211.6" textLength="133.9" lengthAdjust="spacingAndGlyphs" font-size="22.5" fill="#c25e48">Format Shape</text>
<path d="M1463.5 199.3h10l-5 5.2z" fill="#555"/>
<path d="M1507 197L1516 206M1516 197L1507 206" fill="none" stroke="#555" stroke-width="1.4"/>
<text x="1255" y="241.7" textLength="83.9" lengthAdjust="spacingAndGlyphs" font-size="12.5" fill="#262626" font-weight="bold">Shape Options</text>
<text x="1357" y="241.7" textLength="68.6" lengthAdjust="spacingAndGlyphs" font-size="12.5" fill="#444">Text Options</text>
<path d="M1257.5 269.5L1266.5 261L1277 271.5L1267.5 278.8Z" fill="#fdfdfc" stroke="#c0472e" stroke-width="1.3" stroke-linejoin="round"/>
<path d="M1262.5 264.5C1261 258.5 1266 256.5 1267.5 261.5" fill="none" stroke="#c0472e" stroke-width="1.2"/>
<path d="M1277 268.5C1279.5 272 1279.5 275.5 1277.3 278C1275.8 275.5 1275.8 272.5 1277 268.5Z" fill="#c0472e"/>
<path d="M1305.3 258L1314.8 265L1311.3 275.5H1299.3L1295.8 265Z" fill="#fdfdfc" stroke="#555" stroke-width="1.2" stroke-linejoin="round"/>
<path d="M1299.5 276.5H1311L1312.5 279.5H1298Z" fill="#d8d8d5"/>
<rect x="1339.5" y="262.5" width="16" height="16.5" fill="#707070" rx="1.5"/>
<path d="M1347.5 264.5v12.5M1341.3 270.7h12.5" fill="none" stroke="#f0f0f0" stroke-width="1.3"/>
<path d="M1339.5 258.3h16M1339.5 256.3v4M1355.5 256.3v4" fill="none" stroke="#666" stroke-width="1"/>
<path d="M1335 262.5v16.5M1333 262.5h4M1333 279h4" fill="none" stroke="#666" stroke-width="1"/>
<path d="M1251.4 297.8H1261.2L1266.7 291.2L1272.2 297.8H1523.6" fill="none" stroke="#d4d4d0" stroke-width="1"/>
<path d="M1265.3 307.5V315.8H1257Z" fill="#444"/>
<text x="1272.8" y="316.7" textLength="16.1" lengthAdjust="spacingAndGlyphs" font-size="12.5" fill="#c0472e" font-weight="bold">Fill</text>
<circle cx="1279.2" cy="340.3" r="5.9" fill="#fdfdfc" stroke="#9a9a96" stroke-width="1"/>
<text x="1291" y="344.8" textLength="33.4" lengthAdjust="spacingAndGlyphs" font-size="12.5" fill="#444">No fill</text>
<circle cx="1279.2" cy="364.4" r="5.9" fill="#fdfdfc" stroke="#9a9a96" stroke-width="1"/>
<circle cx="1279.2" cy="364.4" r="2.7" fill="#555"/>
<text x="1291" y="368.9" textLength="45" lengthAdjust="spacingAndGlyphs" font-size="12.5" fill="#444">Solid fill</text>
<circle cx="1279.2" cy="388.9" r="5.9" fill="#fdfdfc" stroke="#9a9a96" stroke-width="1"/>
<text x="1291" y="393.4" textLength="64.6" lengthAdjust="spacingAndGlyphs" font-size="12.5" fill="#444">Gradient fill</text>
<circle cx="1279.2" cy="413" r="5.9" fill="#fdfdfc" stroke="#9a9a96" stroke-width="1"/>
<text x="1291" y="417.5" textLength="111" lengthAdjust="spacingAndGlyphs" font-size="12.5" fill="#444">Picture or texture fill</text>
<circle cx="1279.2" cy="437.2" r="5.9" fill="#fdfdfc" stroke="#9a9a96" stroke-width="1"/>
<text x="1291" y="441.7" textLength="56.2" lengthAdjust="spacingAndGlyphs" font-size="12.5" fill="#444">Pattern fill</text>
<circle cx="1279.2" cy="461.7" r="5.9" fill="#fdfdfc" stroke="#9a9a96" stroke-width="1"/>
<text x="1291" y="466.2" textLength="113.7" lengthAdjust="spacingAndGlyphs" font-size="12.5" fill="#444">Slide background fill</text>
<path d="M1291 346.5H1299.5" fill="none" stroke="#444" stroke-width="0.9"/>
<path d="M1291 370.6H1298" fill="none" stroke="#444" stroke-width="0.9"/>
<path d="M1291 395.1H1300" fill="none" stroke="#444" stroke-width="0.9"/>
<path d="M1291 419.2H1297.5" fill="none" stroke="#444" stroke-width="0.9"/>
<path d="M1298 443.4H1304.5" fill="none" stroke="#444" stroke-width="0.9"/>
<path d="M1321 467.9H1328" fill="none" stroke="#444" stroke-width="0.9"/>
<path d="M1272 477H1502" fill="none" stroke="#e1e1dd" stroke-width="1"/>
<text x="1280.6" y="502" textLength="30" lengthAdjust="spacingAndGlyphs" font-size="12.5" fill="#444">Color</text>
<path d="M1280.6 503.8H1289" fill="none" stroke="#444" stroke-width="0.9"/>
<rect x="1460.5" y="484.5" width="42" height="25" fill="#fdfdfc" stroke="#ababa7" stroke-width="1"/>
<path d="M1470.5 496.5L1475 490.5L1481.5 497L1476 501Z" fill="#fdfdfc" stroke="#555" stroke-width="1"/>
<path d="M1474 491.5C1473.5 488 1476.5 487.5 1477 490.5M1482 496c1.3 2 1.2 3.6 0.2 5" fill="none" stroke="#555" stroke-width="0.9"/>
<rect x="1467.5" y="501.5" width="16" height="3" fill="#fdfdfc" stroke="#9a9a96" stroke-width="0.8"/>
<path d="M1490 494h7l-3.5 3.8z" fill="#555"/>
<text x="1280.6" y="531" textLength="72.2" lengthAdjust="spacingAndGlyphs" font-size="12.5" fill="#444">Transparency</text>
<path d="M1280.6 532.8H1287" fill="none" stroke="#444" stroke-width="0.9"/>
<path d="M1363.5 525.6H1421.4" fill="none" stroke="#b5b5b1" stroke-width="1"/>
<rect x="1361" y="520.6" width="2.8" height="9.2" fill="#666"/>
<rect x="1427" y="515.8" width="75.2" height="20.4" fill="#fdfdfc" stroke="#c0c0bc" stroke-width="1"/>
<text x="1432.8" y="529" textLength="13.9" lengthAdjust="spacingAndGlyphs" font-size="10.5" fill="#555">0%</text>
<path d="M1491 522.3l2.6-2.9l2.6 2.9zM1491 529.6l2.6 2.9l2.6-2.9z" fill="#444"/>
<path d="M1265.3 553.8V562.1H1257Z" fill="#444"/>
<text x="1272.8" y="563" textLength="23.6" lengthAdjust="spacingAndGlyphs" font-size="12.5" fill="#c0472e" font-weight="bold">Line</text>
<circle cx="1279.2" cy="587.2" r="5.9" fill="#fdfdfc" stroke="#9a9a96" stroke-width="1"/>
<circle cx="1279.2" cy="587.2" r="2.7" fill="#555"/>
<text x="1291" y="591.7" textLength="39.6" lengthAdjust="spacingAndGlyphs" font-size="12.5" fill="#444">No line</text>
<circle cx="1279.2" cy="611" r="5.9" fill="#fdfdfc" stroke="#9a9a96" stroke-width="1"/>
<text x="1291" y="615.5" textLength="51.2" lengthAdjust="spacingAndGlyphs" font-size="12.5" fill="#444">Solid line</text>
<circle cx="1279.2" cy="635.3" r="5.9" fill="#fdfdfc" stroke="#9a9a96" stroke-width="1"/>
<text x="1291" y="639.8" textLength="70" lengthAdjust="spacingAndGlyphs" font-size="12.5" fill="#444">Gradient line</text>
<path d="M1291 593.4H1299.5" fill="none" stroke="#444" stroke-width="0.9"/>
<path d="M1291 617.2H1298" fill="none" stroke="#444" stroke-width="0.9"/>
<path d="M1291 641.5H1300" fill="none" stroke="#444" stroke-width="0.9"/>
</svg>
<!-- taskbar -->
<svg class="uisvg" viewBox="0 0 1600 900">
<defs><linearGradient id="tbg" x1="0" y1="0" x2="0" y2="1"><stop offset="0" stop-color="#17120f"/><stop offset="0.45" stop-color="#1f1915"/><stop offset="1" stop-color="#2b221c"/></linearGradient></defs>
<rect x="1535" y="18" width="65" height="882" fill="url(#tbg)"/>
<rect x="1535" y="244.5" width="65" height="46" fill="#403c3a"/>
<rect x="1597" y="149" width="3" height="43" fill="#8fb6e8"/>
<rect x="1597" y="199" width="3" height="41" fill="#8fb6e8"/>
<rect x="1597" y="244.5" width="3" height="46" fill="#8fb6e8"/>
<path d="M1559.5 31.8l7-1v7h-7zM1567.6 30.6l9-1.3v8.5h-9zM1559.5 38.9h7v7l-7-1zM1567.6 38.9h9v8.5l-9-1.3z" fill="#ffffff"/>
<circle cx="1570" cy="78" r="5.4" fill="none" stroke="#fff" stroke-width="1.5"/>
<path d="M1566 82L1559.5 88.5" fill="none" stroke="#fff" stroke-width="1.7"/>
<path d="M1560 112.5h11M1560 126.5h11" fill="none" stroke="#fff" stroke-width="1.3"/>
<rect x="1560.5" y="115.3" width="10" height="8.4" fill="none" stroke="#fff" stroke-width="1.4"/>
<path d="M1575 112v4M1575 118.5v4M1575 124v3" fill="none" stroke="#fff" stroke-width="1.4"/>
<path d="M1556.5 160.5h8l2 2h13v17h-23z" fill="#f5c84c"/>
<path d="M1556.5 165h23v14.5h-23z" fill="#fbe08a"/>
<rect x="1559.5" y="170.5" width="17" height="9" fill="#5aa9dc"/>
<rect x="1563" y="174.5" width="10" height="5" fill="#fbe08a"/>
<rect x="1565" y="176.5" width="6" height="3" fill="#2b2b2b"/>
<circle cx="1567.3" cy="219.4" r="11.3" fill="#db4437"/>
<path d="M1567.3 219.4L1561.6 229.2A11.3 11.3 0 0 1 1557.5 213.7Z" fill="#0f9d58"/>
<path d="M1567.3 219.4L1561.6 229.2A11.3 11.3 0 0 0 1577.1 213.8L1567.3 213.8Z" fill="#ffcd40"/>
<path d="M1567.3 219.4L1577.1 213.8" fill="none"/>
<circle cx="1567.3" cy="219.4" r="5.2" fill="#f1f1f1"/>
<circle cx="1567.3" cy="219.4" r="4.1" fill="#4285f4"/>
<rect x="1566" y="259.5" width="12.5" height="18" fill="#f4f0ee" rx="1"/>
<path d="M1556.5 259L1570.5 256.5V280.5L1556.5 278Z" fill="#d24726"/>
<text x="1559.5" y="273.5" textLength="8" lengthAdjust="spacingAndGlyphs" font-size="13" fill="#ffffff" font-weight="bold">P</text>
<rect x="1572" y="262.5" width="5" height="4.5" fill="#d24726"/>
<path d="M1572 270h5M1572 272.7h5" fill="none" stroke="#d24726" stroke-width="1.2"/>
<circle cx="1567.2" cy="317.2" r="11.4" fill="#ffffff"/>
<path d="M1559.8 309.5Q1568.5 314 1574.5 325.5M1574.6 309.5Q1565.9 314 1559.9 325.5" fill="none" stroke="#1d1815" stroke-width="1.5"/>
<path d="M1563 306.6Q1567.2 309.2 1571.4 306.6Q1567.2 304.6 1563 306.6Z" fill="#1d1815"/>
<path d="M1573.9 365.6L1577.8 365.6M1572 370.2L1574.8 373M1567.4 372.1L1567.4 376M1562.8 370.2L1560 373M1560.9 365.6L1557 365.6M1562.8 361L1560 358.2M1567.4 359.1L1567.4 355.2M1572 361L1574.8 358.2" fill="none" stroke="#fff" stroke-width="4"/>
<circle cx="1567.4" cy="365.6" r="6.3" fill="none" stroke="#fff" stroke-width="3.4"/>
<ellipse cx="1567" cy="411.5" rx="10.5" ry="7.5" fill="#f0e9ea" transform="rotate(-25 1567 411.5)"/>
<ellipse cx="1566.3" cy="409.5" rx="7.5" ry="4" fill="#d9534f" transform="rotate(-25 1566.3 409.5)"/>
<path d="M1562 414l9 8M1572 413l-7 10" fill="none" stroke="#3a8fd6" stroke-width="2"/>
<circle cx="1573" cy="424" r="2.2" fill="none" stroke="#3a8fd6" stroke-width="1.5"/>
<circle cx="1563.5" cy="425" r="2.2" fill="none" stroke="#3a8fd6" stroke-width="1.5"/>
<path d="M1561 455.5L1575.5 452.5L1579.5 473L1557 474.5Z" fill="#bfe3f5"/>
<path d="M1561 455.5L1575.5 452.5L1576.3 456L1561 459.5Z" fill="#e9f6fc"/>
<path d="M1575.5 452.5L1579.5 473L1576 474L1573 455Z" fill="#8fc4e0"/>
<circle cx="1571.5" cy="672.5" r="2.6" fill="none" stroke="#fff" stroke-width="1.2"/>
<circle cx="1564.5" cy="678.5" r="2.6" fill="none" stroke="#fff" stroke-width="1.2"/>
<path d="M1567.5 680.5c1-4 7.5-4 8 0M1560.5 686.5c1-4 7.5-4 8 0" fill="none" stroke="#fff" stroke-width="1.2"/>
<path d="M1555.5 705.5L1549 711.7L1555.5 718" fill="none" stroke="#fff" stroke-width="1.3"/>
<path d="M1546.5 741.5a3.4 3.4 0 0 1 1.5-6.3a5 5 0 0 1 9-1.7a3.8 3.8 0 0 1 2.6 7.4q-0.6 0.6-1.6 0.6z" fill="#ffffff"/>
<rect x="1571.5" y="733.5" width="13.5" height="7.5" fill="none" stroke="#fff" stroke-width="1.2"/>
<rect x="1573.3" y="735.3" width="9.9" height="3.9" fill="#ffffff"/>
<rect x="1569.6" y="735.7" width="1.6" height="3.1" fill="#ffffff"/>
<path d="M1571.5 732.5l2-2.5" fill="none" stroke="#fff" stroke-width="1"/>
<path d="M1545 759.5h2.5l3.5-3.2v11.4l-3.5-3.2h-2.5z" fill="none" stroke="#fff" stroke-width="1.1" stroke-linejoin="round"/>
<path d="M1553.5 759a4 4 0 0 1 0 6M1555.8 756.6a7.4 7.4 0 0 1 0 10.8M1558.1 754.4a10.6 10.6 0 0 1 0 15.2" fill="none" stroke="#d0d0d0" stroke-width="1"/>
<circle cx="1583" cy="767.3" r="1.3" fill="#ffffff"/>
<path d="M1578.6 767.5a4.6 4.6 0 0 1 4.6-4.6M1575.4 767.5a7.8 7.8 0 0 1 7.8-7.8M1572.2 767.5a11 11 0 0 1 11-11" fill="none" stroke="#e0e0e0" stroke-width="1.1"/>
<text x="1541.5" y="799.5" textLength="13.5" lengthAdjust="spacingAndGlyphs" font-size="19" fill="#ffffff">A</text>
<rect x="1570.5" y="784" width="15.5" height="15.5" fill="#ffffff" rx="1.5"/>
<circle cx="1577.8" cy="791.5" r="4.6" fill="none" stroke="#1d1815" stroke-width="2"/>
<rect x="1571.5" y="785" width="6" height="7" fill="#ffffff"/>
<circle cx="1578.3" cy="791.7" r="5.3" fill="#1d1815"/>
<circle cx="1576.3" cy="790" r="3.6" fill="#ffffff"/>
<text x="1545.8" y="836.5" textLength="43.1" lengthAdjust="spacingAndGlyphs" font-size="12.5" fill="#ffffff">8:41 PM</text>
<text x="1540.3" y="855" textLength="55.5" lengthAdjust="spacingAndGlyphs" font-size="12.5" fill="#ffffff">12/9/2018</text>
<path d="M1558.5 876.5h18v14h-12l-3 3.4v-3.4h-3z" fill="#ffffff"/>
<path d="M1562 881h11M1562 884h11M1562 887h8" fill="none" stroke="#1d1815" stroke-width="0.9"/>
<circle cx="1575.5" cy="894" r="6.3" fill="#1d1815" stroke="#8a8a8a" stroke-width="1"/>
<text x="1573" y="898" textLength="5.2" lengthAdjust="spacingAndGlyphs" font-size="10" fill="#ffffff">3</text>
</svg>
<!-- misc -->
<svg class="uisvg" viewBox="0 0 1600 900">
<rect x="205.5" y="873" width="13" height="13" fill="#fdfdfc" stroke="#c9c9c5" stroke-width="1"/>
<path d="M214 876l-4.6 3.6l4.6 3.6z" fill="#555"/>
<rect x="219" y="873.5" width="12" height="12.5" fill="#dededa"/>
<rect x="231" y="873.5" width="960.5" height="12.5" fill="#ffffff" stroke="#d6d6d2" stroke-width="1"/>
<rect x="1204.5" y="873" width="13" height="13" fill="#fdfdfc" stroke="#c9c9c5" stroke-width="1"/>
<path d="M1209 876l4.6 3.6l-4.6 3.6z" fill="#555"/>
<path d="M201 891.5H1239" fill="none" stroke="#d2d2ce" stroke-width="1"/>
<rect x="1195" y="893.5" width="34" height="6.5" fill="#cfcfcb"/>
<path d="M78 898.5h14M1205 897.5h18v3M1240 897.5h6v3M1250 897.5h6v3M1275 897.5h6v3M1285 897.5h8v3M1309 897.5h14v3M1516 898h8" fill="none" stroke="#777" stroke-width="1.2"/>
</svg>
</body></html>
